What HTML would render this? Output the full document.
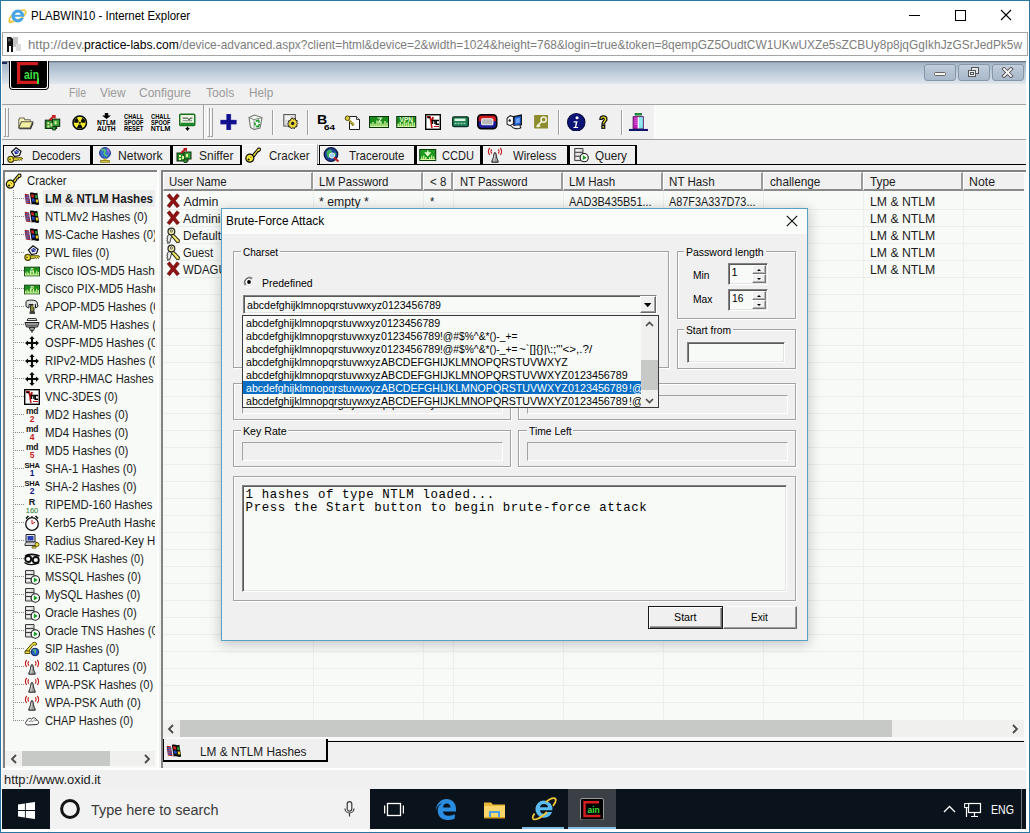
<!DOCTYPE html>
<html><head><meta charset="utf-8"><title>PLABWIN10 - Internet Explorer</title>
<style>
*{box-sizing:border-box;margin:0;padding:0}
html,body{width:1030px;height:833px;overflow:hidden;background:#fff}
body{font-family:"Liberation Sans",sans-serif;font-size:12px;color:#000;position:relative}
.t{position:absolute;white-space:pre;line-height:1;transform-origin:0 0}
.clip{position:absolute;overflow:hidden}
</style></head>
<body>
<svg style="position:absolute;left:8.3px;top:6.3px;" width="19.2" height="19.2" viewBox="0 0 18 18"><ellipse cx="9" cy="9.2" rx="8.6" ry="3.6" fill="none" stroke="#f0c63f" stroke-width="1.5" transform="rotate(-30 9 9.2)"/><path d="M9.2 3.4a6 6 0 1 0 5.7 7.9h-3.2a3 3 0 0 1-5.3-1.2h8.8A6 6 0 0 0 9.2 3.4zM6.3 8.1a3 3 0 0 1 5.7 0z" fill="#46a5e6"/><path d="M1.2 13.5c-.9 2 .6 2.6 3.3 1.4" fill="none" stroke="#f0c63f" stroke-width="1.3"/></svg><span class="t" style="left:30.9px;top:9.67px;font-size:12.2px;transform:scaleX(0.9395);">PLABWIN10 - Internet Explorer</span><div style="position:absolute;left:909px;top:15px;width:11px;height:1px;background:#000"></div><div style="position:absolute;left:955px;top:10px;width:11px;height:11px;border:1px solid #000"></div><svg style="position:absolute;left:1000px;top:9px;" width="12" height="12" viewBox="0 0 12 12"><path d="M1 1L11 11M11 1L1 11" stroke="#000" stroke-width="1.1"/></svg><div style="position:absolute;left:2px;top:32px;width:1026px;height:24px;border:1px solid #a6a6a6;background:#fff"></div><svg style="position:absolute;left:7px;top:36px;" width="15" height="16" viewBox="0 0 15 16"><rect x="6" y="1" width="5" height="10" fill="#c4c4c4"/><rect x="9" y="8" width="5" height="7" fill="#dcdcdc"/><path d="M0 1h4l2 2v13h-2v-6h-2v6h-2z" fill="#111"/><rect x="1" y="2.5" width="2.5" height="3" fill="#555"/></svg><span class="t" style="left:27.5px;top:38.26px;font-size:13.4px;color:#7d7d7d;transform:scaleX(0.9808);">http://dev.</span><span class="t" style="left:84.2px;top:38.26px;font-size:13.4px;transform:scaleX(0.9034);">practice-labs.com</span><span class="t" style="left:179px;top:38.26px;font-size:13.4px;color:#7d7d7d;transform:scaleX(0.8890);">/device-advanced.aspx?client=html&amp;device=2&amp;width=1024&amp;height=768&amp;login=true&amp;token=8qempGZ5OudtCW1UKwUXZe5sZCBUy8p8jqGgIkhJzGSrJedPk5w</span>
<div style="position:absolute;left:2px;top:61px;width:1024px;height:768px;background:#f0f0f0"></div><div style="position:absolute;left:2px;top:61px;width:1024px;height:23px;background:linear-gradient(#56626e 0,#7d8b9a 1px,#a5b7c9 2px,#b6c5d5 9px,#cdd7e2 17px,#dfe6ee 23px)"></div><div style="position:absolute;left:9px;top:61px;width:40px;height:29px;background:#000;border-radius:0 0 4px 4px"></div><div style="position:absolute;left:10px;top:61px;width:38px;height:27.5px;border:1px solid #fff;border-top:0;border-radius:0 0 3px 3px"></div><svg style="position:absolute;left:15px;top:61px;" width="28" height="25" viewBox="0 0 28 25"><path d="M23 2.700H3.600V21.300H23" fill="none" stroke="#d01c1c" stroke-width="3.300"/></svg><span class="t" style="left:24px;top:69.12px;font-size:12.5px;font-weight:700;color:#3ee03e;transform:scaleX(0.8304);">ain</span><div style="position:absolute;left:37.3px;top:78px;width:1.5px;height:6px;background:#3ee03e"></div><div style="position:absolute;left:2px;top:62px;width:5px;height:2px;background:#1c2a5a"></div><div style="position:absolute;left:924px;top:64px;width:32px;height:17px;border:1px solid #8797aa;border-radius:3px;background:linear-gradient(#c3cfdc,#b3c1d1 50%,#aab9cb)"></div><div style="position:absolute;left:958px;top:64px;width:32px;height:17px;border:1px solid #8797aa;border-radius:3px;background:linear-gradient(#c3cfdc,#b3c1d1 50%,#aab9cb)"></div><div style="position:absolute;left:992px;top:64px;width:32px;height:17px;border:1px solid #8797aa;border-radius:3px;background:linear-gradient(#c3cfdc,#b3c1d1 50%,#aab9cb)"></div><div style="position:absolute;left:934px;top:72px;width:12px;height:4px;background:#f4f4f4;border:1px solid #666;border-radius:1.5px"></div><svg style="position:absolute;left:967px;top:66px;" width="14" height="13" viewBox="0 0 14 13"><rect x="4.5" y="1.5" width="7" height="6" fill="#dfe6ee" stroke="#555" stroke-width="1"/><rect x="1.5" y="4.5" width="7" height="6" fill="#e8edf3" stroke="#555" stroke-width="1"/><rect x="3.5" y="6.5" width="3" height="2" fill="none" stroke="#555" stroke-width="1"/></svg><svg style="position:absolute;left:1001px;top:66.5px;" width="13" height="11" viewBox="0 0 13 11"><path d="M3 2L10 9M10 2L3 9" stroke="#5a5a5a" stroke-width="3.8" stroke-linecap="square"/><path d="M3 2L10 9M10 2L3 9" stroke="#f6f6f6" stroke-width="1.9" stroke-linecap="square"/></svg><span class="t" style="left:68.5px;top:86.63px;font-size:12.6px;color:#9a9a9a;transform:scaleX(0.8376);">File</span><span class="t" style="left:99.5px;top:86.63px;font-size:12.6px;color:#9a9a9a;transform:scaleX(0.9417);">View</span><span class="t" style="left:139.3px;top:86.63px;font-size:12.6px;color:#9a9a9a;transform:scaleX(0.9522);">Configure</span><span class="t" style="left:206.2px;top:86.63px;font-size:12.6px;color:#9a9a9a;transform:scaleX(0.9658);">Tools</span><span class="t" style="left:249.3px;top:86.63px;font-size:12.6px;color:#9a9a9a;transform:scaleX(0.9341);">Help</span>
<div style="position:absolute;left:2px;top:104px;width:1024px;height:36px;background:#f7faf7;border-top:1px solid #a3a3a3;border-bottom:1px solid #a3a3a3"></div><div style="position:absolute;left:2px;top:105px;width:653px;height:34px;background:#f0f0f0;border-right:1px solid #fdfdfd"></div><div style="position:absolute;left:203px;top:105px;width:2px;height:34px;background:#fff;border-left:1px solid #a0a0a0"></div><div style="position:absolute;left:3px;top:108px;width:3px;height:29px;border-left:1px solid #fff;border-right:1px solid #a0a0a0;border-bottom:1px solid #a0a0a0"></div><div style="position:absolute;left:6px;top:108px;width:3px;height:29px;border-left:1px solid #fff;border-right:1px solid #a0a0a0;border-bottom:1px solid #a0a0a0"></div><div style="position:absolute;left:207px;top:108px;width:3px;height:29px;border-left:1px solid #fff;border-right:1px solid #a0a0a0;border-bottom:1px solid #a0a0a0"></div><div style="position:absolute;left:210px;top:108px;width:3px;height:29px;border-left:1px solid #fff;border-right:1px solid #a0a0a0;border-bottom:1px solid #a0a0a0"></div><div style="position:absolute;left:272px;top:110px;width:2px;height:25px;border-left:1px solid #a0a0a0;border-right:1px solid #fff"></div><div style="position:absolute;left:307px;top:110px;width:2px;height:25px;border-left:1px solid #a0a0a0;border-right:1px solid #fff"></div><div style="position:absolute;left:558px;top:110px;width:2px;height:25px;border-left:1px solid #a0a0a0;border-right:1px solid #fff"></div><div style="position:absolute;left:621px;top:110px;width:2px;height:25px;border-left:1px solid #a0a0a0;border-right:1px solid #fff"></div><svg style="position:absolute;left:17px;top:115px;" width="17" height="15" viewBox="0 0 16 14.500"><path d="M1.5 12.5V4.5l1-1.5h4l1 1.5h5v1.5" fill="#f7f4b8" stroke="#6b6b5a" stroke-width="1"/><path d="M1.5 12.5L4 6.5h11l-2.5 6z" fill="#f3efa2" stroke="#55554a" stroke-width="1"/><path d="M2 13.3h11l2.4-6" fill="none" stroke="#2a2a2a" stroke-width="1"/></svg><svg style="position:absolute;left:44px;top:114px;" width="17" height="16.5" viewBox="0 0 16 16"><rect x="1" y="6" width="11" height="8" fill="#2d8a2d" stroke="#0d2d0d" stroke-width="1"/><rect x="8" y="5" width="7" height="7" fill="#3aa03a" stroke="#0d2d0d" stroke-width="1"/><path d="M3 8h2v2h-2zM6 9h2v3h-2zM10 7h2v3h-2zM3 11h2v2h-2z" fill="#d8f0a0"/><path d="M5 6L10 1.5" stroke="#c01818" stroke-width="1.8"/><path d="M7 1h4v4z" fill="#c01818"/><path d="M11 13v2.5h-3v-2" fill="#3aa03a" stroke="#0d2d0d" stroke-width=".8"/></svg><svg style="position:absolute;left:72px;top:114.5px;" width="15.5" height="15.5" viewBox="0 0 16 16"><circle cx="8" cy="8" r="7" fill="#f4ec2a" stroke="#000" stroke-width="1.5"/><path d="M8.95 9.65L10.95 13.11A5.9 5.9 0 0 1 5.05 13.11L7.05 9.65A1.9 1.9 0 0 0 8.95 9.65zM6.10 8.00L2.10 8.00A5.9 5.9 0 0 1 5.05 2.89L7.05 6.35A1.9 1.9 0 0 0 6.10 8.00zM8.95 6.35L10.95 2.89A5.9 5.9 0 0 1 13.90 8.00L9.90 8.00A1.9 1.9 0 0 0 8.95 6.35z" fill="#0a0a0a"/><circle cx="8" cy="8" r="1.1" fill="#0a0a0a"/></svg><svg style="position:absolute;left:101.5px;top:113px;" width="9" height="6" viewBox="0 0 9 6"><path d="M2.800 0h3.400v2.500H9L4.500 6 0 2.500h2.800z" fill="#000"/></svg><span class="t" style="left:96.8px;top:118.97px;font-size:7px;font-weight:700;transform:scaleX(0.9561);">NTLM</span><span class="t" style="left:96.8px;top:124.77px;font-size:7px;font-weight:700;transform:scaleX(0.9561);">AUTH</span><span class="t" style="left:123.6px;top:113.07px;font-size:7px;font-weight:700;transform:scaleX(0.8179);">CHALL</span><span class="t" style="left:123.6px;top:118.87px;font-size:7px;font-weight:700;transform:scaleX(0.7913);">SPOOF</span><span class="t" style="left:123.6px;top:124.67px;font-size:7px;font-weight:700;transform:scaleX(0.8311);">RESET</span><span class="t" style="left:150.8px;top:113.07px;font-size:7px;font-weight:700;transform:scaleX(0.8179);">CHALL</span><span class="t" style="left:150.8px;top:118.87px;font-size:7px;font-weight:700;transform:scaleX(0.7913);">SPOOF</span><span class="t" style="left:150.8px;top:124.67px;font-size:7px;font-weight:700;">NTLM</span><svg style="position:absolute;left:179px;top:112.6px;" width="16.5" height="19.5" viewBox="0 0 16 18"><rect x=".7" y=".7" width="14.600" height="11" rx="1" fill="#e9f5e0" stroke="#17701f" stroke-width="1.400"/><rect x="1.500" y="9" width="13" height="2.500" fill="#1c8a28"/><path d="M3.500 4.500h5l1.500 2 1-2h2" fill="none" stroke="#333" stroke-width=".9"/><path d="M3.500 7h9" stroke="#666" stroke-width=".7"/><path d="M6 14h1.500v-1.200h1.500V14h1.500L8.250 17z" fill="#000"/></svg><svg style="position:absolute;left:220px;top:114px;" width="17" height="16" viewBox="0 0 16 16"><path d="M6 0h4.4v6H16v4.2h-5.6V16H6v-5.8H0V6h6z" fill="#10108c"/><path d="M6 0h4.4v6H16v4.2h-5.6V16H6v-5.8H0V6h6z" fill="none" stroke="#4a4ab8" stroke-width=".6" opacity=".6"/></svg><svg style="position:absolute;left:246.5px;top:114px;" width="17" height="16" viewBox="0 0 16 16"><path d="M1.5 3.500l5.500-2.500 7.500 2.500-2 10.500-6 1.500-3.500-2z" fill="#f4f6f4" stroke="#6f776f" stroke-width="1.100"/><path d="M1.500 3.500l5 2.200 8-2.200" fill="none" stroke="#7f877f" stroke-width="1"/><path d="M6.500 5.700L6.500 15" stroke="#9aa09a" stroke-width=".9"/><path d="M8.200 7.200l2.600-.8 1 2.200M12 10l-1.200 2.600-2.600-.3M7.800 11.200l-.8-2.600" fill="none" stroke="#1f9a2e" stroke-width="1.700"/></svg><svg style="position:absolute;left:283px;top:114.3px;" width="16" height="15" viewBox="0 0 16 15.500"><rect x=".5" y=".5" width="12" height="12" fill="#d9d9d9" stroke="#555" stroke-width="1"/><rect x="2" y="2" width="5" height="4" fill="#f4f4f4"/><path d="M9 4l1.4 1.2 1.8-.6.5 1.8 1.8.5-.6 1.8L15 10l-1.2 1.2.4 1.8-1.8.3-.8 1.7-1.7-.7-1.6.9-.9-1.6-1.8-.2.2-1.8L4.400 10.300l1.300-1.300-.300-1.800 1.800-.300.700-1.700z" fill="#e8d23a" stroke="#1a1a1a" stroke-width="1"/><circle cx="9.7" cy="9.700" r="1.700" fill="#1a1a1a"/></svg><span class="t" style="left:316.8px;top:113.92px;font-size:12.5px;font-weight:700;transform:scaleX(1.1294);">B</span><span class="t" style="left:323.5px;top:124.45px;font-size:7.5px;font-weight:700;transform:scaleX(1.3184);">64</span><svg style="position:absolute;left:344px;top:114.6px;" width="17" height="15.5" viewBox="0 0 16 15.500"><path d="M5 1.500h7l3 3V14.500H5z" fill="#fbfbfb" stroke="#1a1a1a" stroke-width="1"/><path d="M12 1.500v3h3" fill="#d5d5d5" stroke="#1a1a1a" stroke-width=".8"/><circle cx="3" cy="3.200" r="2.300" fill="#e2cd3c" stroke="#4a4210" stroke-width="1"/><path d="M4.500 4.800l5 5M7.500 7.800l-1.300 1.300M9 9.300l-1.300 1.300" stroke="#8a7a18" stroke-width="1.700"/><path d="M4.500 4.800l5 5" stroke="#e2cd3c" stroke-width=".8"/></svg><svg style="position:absolute;left:369px;top:116px;" width="20" height="12" viewBox="0 0 20 12"><rect x=".5" y=".5" width="19" height="11" fill="#1c8c1c" stroke="#0a330a" stroke-width="1"/><rect x="1.3" y="7.5" width="1.300" height="3.0" fill="#d2f79a"/><rect x="3.3" y="6" width="1.300" height="4.5" fill="#d2f79a"/><rect x="5.3" y="7.5" width="1.300" height="3.0" fill="#d2f79a"/><rect x="7.3" y="4.5" width="1.300" height="6.0" fill="#d2f79a"/><rect x="9.3" y="6.5" width="1.300" height="4.0" fill="#d2f79a"/><rect x="11.3" y="5.5" width="1.300" height="5.0" fill="#d2f79a"/><rect x="13.3" y="7.5" width="1.300" height="3.0" fill="#d2f79a"/><rect x="15.3" y="5" width="1.300" height="5.5" fill="#d2f79a"/><rect x="17.3" y="6.5" width="1.300" height="4.0" fill="#d2f79a"/><rect x="1" y="9.800" width="18" height="1.200" fill="#d2f79a"/><path d="M8.500 2h4l-3 4h3" fill="none" stroke="#e8ffd0" stroke-width="1.100"/></svg><svg style="position:absolute;left:396px;top:116px;" width="20.5" height="12" viewBox="0 0 20 12"><rect x=".5" y=".5" width="19" height="11" fill="#1c8c1c" stroke="#0a330a" stroke-width="1"/><rect x="1.3" y="7.5" width="1.300" height="3.0" fill="#d2f79a"/><rect x="3.3" y="6" width="1.300" height="4.5" fill="#d2f79a"/><rect x="5.3" y="7.5" width="1.300" height="3.0" fill="#d2f79a"/><rect x="7.3" y="4.5" width="1.300" height="6.0" fill="#d2f79a"/><rect x="9.3" y="6.5" width="1.300" height="4.0" fill="#d2f79a"/><rect x="11.3" y="5.5" width="1.300" height="5.0" fill="#d2f79a"/><rect x="13.3" y="7.5" width="1.300" height="3.0" fill="#d2f79a"/><rect x="15.3" y="5" width="1.300" height="5.5" fill="#d2f79a"/><rect x="17.3" y="6.5" width="1.300" height="4.0" fill="#d2f79a"/><rect x="1" y="9.800" width="18" height="1.200" fill="#d2f79a"/><text x="10" y="6.300" font-family="Liberation Sans" font-size="6.500" font-weight="700" fill="#e8ffd0" text-anchor="middle">VPN</text></svg><svg style="position:absolute;left:425px;top:114px;" width="16" height="16" viewBox="0 0 16 16"><rect x=".7" y=".7" width="14.600" height="14.600" fill="#fff" stroke="#000" stroke-width="1.400"/><path d="M2 3h3l1.500 6L8 3" fill="none" stroke="#c01010" stroke-width="1.800"/><path d="M2.500 3.500h2.500" stroke="#000" stroke-width="1.600"/><path d="M7.500 10V6.500h2.500V10" fill="none" stroke="#000" stroke-width="1.500"/><path d="M14 6.500h-2.800v3.800H14" fill="none" stroke="#000" stroke-width="1.500"/><path d="M6 9l1 5" stroke="#c01010" stroke-width="1.500"/><path d="M9 12.500h5" stroke="#c01010" stroke-width="1"/></svg><svg style="position:absolute;left:452px;top:116.3px;" width="17" height="11.5" viewBox="0 0 17 11"><rect x=".6" y=".6" width="15.800" height="9.800" rx="1.500" fill="#1e7a52" stroke="#0b2e22" stroke-width="1.200"/><rect x="2.500" y="2.300" width="11" height="2.500" fill="#d8f5e0"/><path d="M2.500 6.500h2v1.500h-2zM5.500 6.500h2v1.500h-2zM8.500 6.500h2v1.500h-2zM11.500 6.500h2v1.500h-2z" fill="#8fd6ae"/></svg><svg style="position:absolute;left:477px;top:114px;" width="20.5" height="15.5" viewBox="0 0 20 15"><rect x=".8" y=".8" width="18.400" height="13.400" rx="3.500" fill="#1c1c9c" stroke="#000" stroke-width="1.600"/><path d="M1.600 7V4.300a2.700 2.700 0 0 1 2.700-2.700h11.400a2.700 2.700 0 0 1 2.700 2.700V7z" fill="#d01818"/><rect x="4.500" y="4.500" width="11" height="6" rx="1" fill="#b9b9b9" stroke="#f2f2f2" stroke-width="1"/></svg><svg style="position:absolute;left:506px;top:113.6px;" width="17" height="16" viewBox="0 0 16 15"><path d="M1 4l3-2.500 3 1V9l-3 2-3-1.500z" fill="#fafafa" stroke="#222" stroke-width="1"/><path d="M7.500 2.500l7-1.500V10l-7 1.500z" fill="#1f5fd8" stroke="#111" stroke-width="1.100"/><path d="M5 11.500c2 2.500 6 3 9 1.500l-1-2.500" fill="#f1f1f1" stroke="#222" stroke-width="1"/><circle cx="3.500" cy="6" r="1.200" fill="#222"/><path d="M9 4.500l4-1v4.500l-4 1z" fill="#6fa2f2"/></svg><svg style="position:absolute;left:534px;top:115.3px;" width="14.3" height="13.6" viewBox="0 0 14 13.500"><rect x="0" y="0" width="14" height="13.500" rx="1" fill="#8d8d2f"/><circle cx="9.500" cy="4.500" r="2.600" fill="none" stroke="#f4f4d8" stroke-width="1.500"/><path d="M7.700 6.300L2.500 11.500M4.300 9.700l1.700 1.700M2.500 11.500h2.300" stroke="#f4f4d8" stroke-width="1.500" fill="none"/></svg><svg style="position:absolute;left:567px;top:112.8px;" width="18.5" height="18.5" viewBox="0 0 18 18"><circle cx="9" cy="9" r="8.500" fill="#0c1478" stroke="#060a3c" stroke-width="1"/><circle cx="9.800" cy="4.600" r="1.500" fill="#fff"/><path d="M6.500 8h3.800l-1.300 5.500h1.800v1.200H6.300v-1.200h1.300l1-4.300H6.500z" fill="#fff"/></svg><svg style="position:absolute;left:598px;top:115px;" width="11" height="14" viewBox="0 0 10.500 13.500"><path d="M1.800 4.200C1.800 1.800 3.300.8 5.200.8s3.400 1.200 3.400 3.200c0 2.200-2.300 2.600-2.300 4.800H3.800c0-2.800 2.200-3.200 2.200-4.700 0-.7-.4-1.100-1-1.100s-1 .4-1 1.200z" fill="#f4e62a" stroke="#111" stroke-width="1.200"/><rect x="3.700" y="10.200" width="2.700" height="2.600" fill="#f4e62a" stroke="#111" stroke-width="1.200"/></svg><svg style="position:absolute;left:629px;top:112.5px;" width="19" height="18" viewBox="0 0 18.500 17.500"><rect x="6" y="0" width="6" height="2" fill="#2fae4a" stroke="#0c5a22" stroke-width=".8"/><rect x="4" y="3.500" width="5" height="12" fill="#c018b8"/><rect x="9" y="3.500" width="5" height="12" fill="#7fe4ee"/><path d="M9 3.500v12" stroke="#fff" stroke-width="1.200"/><path d="M4 3.500h10v12H4z" fill="none" stroke="#4a0a58" stroke-width=".8"/><path d="M5.200 5h2.600M5.200 7h2.600M5.200 9h2.600M5.200 11h2.600M10.200 5h2.600M10.200 7h2.600M10.200 9h2.600M10.200 11h2.600" stroke="#fff" stroke-width=".6" opacity=".55"/><rect x="0" y="15.500" width="18.500" height="2" fill="#14146e"/></svg>
<div style="position:absolute;left:3px;top:145px;width:88px;height:20px;background:#f0f0f0;border:1px solid #000;box-shadow:inset 1px 1px 0 #fbfbfb,1px 0 0 #000"></div><span class="t" style="left:31.6px;top:149.80px;font-size:12.4px;color:#1c1c1c;transform:scaleX(0.9127);">Decoders</span><div style="position:absolute;left:92px;top:145px;width:79px;height:20px;background:#f0f0f0;border:1px solid #000;box-shadow:inset 1px 1px 0 #fbfbfb,1px 0 0 #000"></div><span class="t" style="left:118.4px;top:149.80px;font-size:12.4px;color:#1c1c1c;transform:scaleX(0.9812);">Network</span><div style="position:absolute;left:172px;top:145px;width:69px;height:20px;background:#f0f0f0;border:1px solid #000;box-shadow:inset 1px 1px 0 #fbfbfb,1px 0 0 #000"></div><span class="t" style="left:199px;top:149.80px;font-size:12.4px;color:#1c1c1c;transform:scaleX(0.9693);">Sniffer</span><div style="position:absolute;left:242px;top:144px;width:76px;height:21px;background:#f4f4f4;border-top:1px solid #fff;border-left:1px solid #fff;border-right:1px solid #9a9a9a"></div><span class="t" style="left:269px;top:149.80px;font-size:12.4px;color:#1c1c1c;transform:scaleX(0.9337);">Cracker</span><div style="position:absolute;left:319px;top:145px;width:96px;height:20px;background:#f0f0f0;border:1px solid #000;box-shadow:inset 1px 1px 0 #fbfbfb,1px 0 0 #000"></div><span class="t" style="left:348.5px;top:149.80px;font-size:12.4px;color:#1c1c1c;transform:scaleX(0.9333);">Traceroute</span><div style="position:absolute;left:416px;top:145px;width:65px;height:20px;background:#f0f0f0;border:1px solid #000;box-shadow:inset 1px 1px 0 #fbfbfb,1px 0 0 #000"></div><span class="t" style="left:442px;top:149.80px;font-size:12.4px;color:#1c1c1c;transform:scaleX(0.8939);">CCDU</span><div style="position:absolute;left:482px;top:145px;width:86px;height:20px;background:#f0f0f0;border:1px solid #000;box-shadow:inset 1px 1px 0 #fbfbfb,1px 0 0 #000"></div><span class="t" style="left:513px;top:149.80px;font-size:12.4px;color:#1c1c1c;transform:scaleX(0.9158);">Wireless</span><div style="position:absolute;left:569px;top:145px;width:67px;height:20px;background:#f0f0f0;border:1px solid #000;box-shadow:inset 1px 1px 0 #fbfbfb,1px 0 0 #000"></div><span class="t" style="left:595px;top:149.80px;font-size:12.4px;color:#1c1c1c;transform:scaleX(0.9481);">Query</span><div style="position:absolute;left:2px;top:164px;width:1024px;height:1px;background:#000"></div><div style="position:absolute;left:242px;top:164px;width:75px;height:1px;background:#f4f4f4"></div><svg style="position:absolute;left:6.5px;top:147px;" width="16" height="16" viewBox="0 0 16 16"><path d="M4.500 5L9 .8l5 3.400-1.500 4.300-5 1z" fill="#f2f2f6" stroke="#111" stroke-width="1.200"/><path d="M7 4.800l2.500-2 2.500 1.700-1 2.300-2.800.5z" fill="#27349c"/><path d="M8 3.700l2.800 1.900" stroke="#cfd4ff" stroke-width=".7"/><circle cx="3.800" cy="12.300" r="3" fill="#f4e43c" stroke="#4a4208" stroke-width="1.200"/><path d="M6.200 10.800h8.800l.5 1.200-1.200 1.200-1-.7-1 1-1.200-1-1 .800H6.400z" fill="#f4e43c" stroke="#4a4208" stroke-width="1"/><circle cx="3" cy="12.300" r=".9" fill="#4a4208"/></svg><svg style="position:absolute;left:97.5px;top:147px;" width="14" height="16" viewBox="0 0 14 16"><circle cx="7" cy="6" r="5.400" fill="#3a6fd6" stroke="#1a2e7a" stroke-width="1"/><path d="M3.500 3.500c1.500-1.500 3-1 3.500 0s-1 2-.5 3.500 2 1 2.500 2.500" fill="none" stroke="#58c46a" stroke-width="1.800"/><path d="M9 2.500c1 .5 2 2 1.500 3.500" fill="none" stroke="#b06ad8" stroke-width="1.500"/><path d="M5.500 11.500h3v1.700h-3z" fill="#d9c53a"/><path d="M2.500 13.500h9v1.800h-9z" fill="#e8d640" stroke="#7a6c18" stroke-width=".8"/></svg><svg style="position:absolute;left:176px;top:146.5px;" width="16" height="16" viewBox="0 0 16 16"><rect x="1" y="6" width="11" height="8" fill="#2d8a2d" stroke="#0d2d0d" stroke-width="1"/><rect x="8" y="5" width="7" height="7" fill="#3aa03a" stroke="#0d2d0d" stroke-width="1"/><path d="M3 8h2v2h-2zM6 9h2v3h-2zM10 7h2v3h-2zM3 11h2v2h-2z" fill="#d8f0a0"/><path d="M5 6L10 1.5" stroke="#c01818" stroke-width="1.8"/><path d="M7 1h4v4z" fill="#c01818"/><path d="M11 13v2.5h-3v-2" fill="#3aa03a" stroke="#0d2d0d" stroke-width=".8"/></svg><svg style="position:absolute;left:245px;top:146.5px;" width="16" height="16" viewBox="0 0 16 16"><path d="M6.800 8.600L13.200 1l2 .3.300 1.700-1.300 1.500-1.300-.2-.2 1.400-1.300.2-.2 1.400-1.800 2.200z" fill="#f4e43c" stroke="#111" stroke-width="1.100"/><circle cx="4.800" cy="11.200" r="4" fill="#f4e43c" stroke="#111" stroke-width="1.200"/><circle cx="3.600" cy="12.400" r="1" fill="#111"/><path d="M5 9.500l1.500 1.500" stroke="#8a7e10" stroke-width=".8"/></svg><svg style="position:absolute;left:322.5px;top:147px;" width="17" height="16" viewBox="0 0 16 16"><circle cx="7.500" cy="7.500" r="6.800" fill="#1d3f9a" stroke="#0a163c" stroke-width="1.200"/><path d="M3 5c1.500-2.500 4-3 5-2s-.5 2.500 0 4-2 1.500-2.500 3.500S3 9 3 5z" fill="#3eb058"/><path d="M10.500 4.500c1.500.5 2.500 2.500 2 4.500l-1.500-1z" fill="#3eb058"/><circle cx="8.500" cy="8.500" r="2.600" fill="#9ad0f0" stroke="#e8f4ff" stroke-width="1"/><path d="M10.500 10.500l4.500 4" stroke="#c02020" stroke-width="2"/></svg><svg style="position:absolute;left:419px;top:149px;" width="17.5" height="12" viewBox="0 0 17 12"><rect x=".5" y=".5" width="16" height="11" fill="#1f9a1f" stroke="#0b3d0b" stroke-width="1"/><path d="M8.500 1.500v4M6.500 4l2 2.500 2-2.500z" stroke="#e8ffd0" stroke-width="1.400" fill="#e8ffd0"/><path d="M2.500 10.500v-3M4.500 10.500v-4M6.500 10.500v-2.500M10.500 10.500v-2.500M12.500 10.500v-4M14.500 10.500v-3" stroke="#d8f8a0" stroke-width="1.200"/><rect x="1" y="10" width="15" height="1" fill="#d8f8a0"/></svg><svg style="position:absolute;left:486.5px;top:146.5px;" width="16" height="16" viewBox="0 0 16 16"><path d="M4.800 15.200c0-2 1.200-3 1.700-5.500l.6-3.200c.3-1.300 1.500-1.300 1.800 0l.6 3.200c.5 2.500 1.700 3.500 1.700 5.500z" fill="#9c9c9c" stroke="#1f1f1f" stroke-width="1"/><path d="M6.800 14.500c0-2 .7-5 1.200-7" fill="none" stroke="#d8d8d8" stroke-width="1"/><path d="M4.800 2.300c-1.100 1.100-1.100 3.100 0 4.200M2.800 1c-1.900 1.900-1.900 5 0 6.900M11.200 2.300c1.100 1.100 1.100 3.100 0 4.200M13.200 1c1.900 1.900 1.900 5 0 6.900" fill="none" stroke="#c41c1c" stroke-width="1.100"/></svg><svg style="position:absolute;left:573px;top:147px;" width="16" height="15.5" viewBox="0 0 16 16"><path d="M1.500 1.500h8.500v12.500h-8.500z" fill="#d9d9d9" stroke="#3c3c3c" stroke-width="1"/><path d="M1.500 5.500h8.500M1.500 9.500h8.500" stroke="#3c3c3c" stroke-width="1"/><path d="M3 3.500h4M3 7.500h4M3 11.500h3" stroke="#f8f8f8" stroke-width="1.200"/><circle cx="11.300" cy="11" r="4.200" fill="#f8fff8" stroke="#141414" stroke-width="1.100"/><path d="M9.900 8.500l3.800 2.500-3.800 2.500z" fill="#149a24"/></svg>
<div style="position:absolute;left:3px;top:170px;width:154px;height:598px;background:#f7faf7;border-left:2px solid #828282;border-top:2px solid #828282"></div><div style="position:absolute;left:157px;top:170px;width:2px;height:598px;background:#fff"></div><div class="clip" style="left:5px;top:172px;width:150px;height:596px"><span class="t" style="left:21.8px;top:2.80px;font-size:12.4px;color:#1c1c1c;transform:scaleX(0.9107);">Cracker</span><div style="position:absolute;left:8px;top:18px;width:1px;height:531px;background:repeating-linear-gradient(#8a8a8a 0,#8a8a8a 1px,transparent 1px,transparent 2px)"></div><div style="position:absolute;left:8px;top:26.3px;width:11px;height:1px;background:repeating-linear-gradient(90deg,#8a8a8a 0,#8a8a8a 1px,transparent 1px,transparent 2px)"></div><div style="position:absolute;left:38px;top:18px;width:112px;height:17px;background:#ececec"></div><span class="t" style="left:40px;top:20.80px;font-size:12.4px;font-weight:700;color:#1c1c1c;transform:scaleX(0.9338);">LM &amp; NTLM Hashes</span><div style="position:absolute;left:8px;top:44.3px;width:11px;height:1px;background:repeating-linear-gradient(90deg,#8a8a8a 0,#8a8a8a 1px,transparent 1px,transparent 2px)"></div><span class="t" style="left:40px;top:38.80px;font-size:12.4px;color:#1c1c1c;transform:scaleX(0.9246);">NTLMv2 Hashes (0)</span><div style="position:absolute;left:8px;top:62.3px;width:11px;height:1px;background:repeating-linear-gradient(90deg,#8a8a8a 0,#8a8a8a 1px,transparent 1px,transparent 2px)"></div><span class="t" style="left:40px;top:56.80px;font-size:12.4px;color:#1c1c1c;transform:scaleX(0.9111);">MS-Cache Hashes (0)</span><div style="position:absolute;left:8px;top:80.3px;width:11px;height:1px;background:repeating-linear-gradient(90deg,#8a8a8a 0,#8a8a8a 1px,transparent 1px,transparent 2px)"></div><span class="t" style="left:40px;top:74.80px;font-size:12.4px;color:#1c1c1c;transform:scaleX(0.9139);">PWL files (0)</span><div style="position:absolute;left:8px;top:98.3px;width:11px;height:1px;background:repeating-linear-gradient(90deg,#8a8a8a 0,#8a8a8a 1px,transparent 1px,transparent 2px)"></div><span class="t" style="left:40px;top:92.80px;font-size:12.4px;color:#1c1c1c;transform:scaleX(0.9254);">Cisco IOS-MD5 Hashes (0)</span><div style="position:absolute;left:8px;top:116.3px;width:11px;height:1px;background:repeating-linear-gradient(90deg,#8a8a8a 0,#8a8a8a 1px,transparent 1px,transparent 2px)"></div><span class="t" style="left:40px;top:110.80px;font-size:12.4px;color:#1c1c1c;transform:scaleX(0.9225);">Cisco PIX-MD5 Hashes (0)</span><div style="position:absolute;left:8px;top:134.3px;width:11px;height:1px;background:repeating-linear-gradient(90deg,#8a8a8a 0,#8a8a8a 1px,transparent 1px,transparent 2px)"></div><span class="t" style="left:40px;top:128.80px;font-size:12.4px;color:#1c1c1c;transform:scaleX(0.9189);">APOP-MD5 Hashes (0)</span><div style="position:absolute;left:8px;top:152.3px;width:11px;height:1px;background:repeating-linear-gradient(90deg,#8a8a8a 0,#8a8a8a 1px,transparent 1px,transparent 2px)"></div><span class="t" style="left:40px;top:146.80px;font-size:12.4px;color:#1c1c1c;transform:scaleX(0.9273);">CRAM-MD5 Hashes (0)</span><div style="position:absolute;left:8px;top:170.3px;width:11px;height:1px;background:repeating-linear-gradient(90deg,#8a8a8a 0,#8a8a8a 1px,transparent 1px,transparent 2px)"></div><span class="t" style="left:40px;top:164.80px;font-size:12.4px;color:#1c1c1c;transform:scaleX(0.9055);">OSPF-MD5 Hashes (0)</span><div style="position:absolute;left:8px;top:188.3px;width:11px;height:1px;background:repeating-linear-gradient(90deg,#8a8a8a 0,#8a8a8a 1px,transparent 1px,transparent 2px)"></div><span class="t" style="left:40px;top:182.80px;font-size:12.4px;color:#1c1c1c;transform:scaleX(0.9165);">RIPv2-MD5 Hashes (0)</span><div style="position:absolute;left:8px;top:206.3px;width:11px;height:1px;background:repeating-linear-gradient(90deg,#8a8a8a 0,#8a8a8a 1px,transparent 1px,transparent 2px)"></div><span class="t" style="left:40px;top:200.80px;font-size:12.4px;color:#1c1c1c;transform:scaleX(0.9013);">VRRP-HMAC Hashes (0)</span><div style="position:absolute;left:8px;top:224.3px;width:11px;height:1px;background:repeating-linear-gradient(90deg,#8a8a8a 0,#8a8a8a 1px,transparent 1px,transparent 2px)"></div><span class="t" style="left:40px;top:218.80px;font-size:12.4px;color:#1c1c1c;transform:scaleX(0.8940);">VNC-3DES (0)</span><div style="position:absolute;left:8px;top:242.3px;width:11px;height:1px;background:repeating-linear-gradient(90deg,#8a8a8a 0,#8a8a8a 1px,transparent 1px,transparent 2px)"></div><span class="t" style="left:40px;top:236.80px;font-size:12.4px;color:#1c1c1c;transform:scaleX(0.9245);">MD2 Hashes (0)</span><div style="position:absolute;left:8px;top:260.3px;width:11px;height:1px;background:repeating-linear-gradient(90deg,#8a8a8a 0,#8a8a8a 1px,transparent 1px,transparent 2px)"></div><span class="t" style="left:40px;top:254.80px;font-size:12.4px;color:#1c1c1c;transform:scaleX(0.9245);">MD4 Hashes (0)</span><div style="position:absolute;left:8px;top:278.3px;width:11px;height:1px;background:repeating-linear-gradient(90deg,#8a8a8a 0,#8a8a8a 1px,transparent 1px,transparent 2px)"></div><span class="t" style="left:40px;top:272.80px;font-size:12.4px;color:#1c1c1c;transform:scaleX(0.9245);">MD5 Hashes (0)</span><div style="position:absolute;left:8px;top:296.3px;width:11px;height:1px;background:repeating-linear-gradient(90deg,#8a8a8a 0,#8a8a8a 1px,transparent 1px,transparent 2px)"></div><span class="t" style="left:40px;top:290.80px;font-size:12.4px;color:#1c1c1c;transform:scaleX(0.9110);">SHA-1 Hashes (0)</span><div style="position:absolute;left:8px;top:314.3px;width:11px;height:1px;background:repeating-linear-gradient(90deg,#8a8a8a 0,#8a8a8a 1px,transparent 1px,transparent 2px)"></div><span class="t" style="left:40px;top:308.80px;font-size:12.4px;color:#1c1c1c;transform:scaleX(0.9110);">SHA-2 Hashes (0)</span><div style="position:absolute;left:8px;top:332.3px;width:11px;height:1px;background:repeating-linear-gradient(90deg,#8a8a8a 0,#8a8a8a 1px,transparent 1px,transparent 2px)"></div><span class="t" style="left:40px;top:326.80px;font-size:12.4px;color:#1c1c1c;transform:scaleX(0.9061);">RIPEMD-160 Hashes (0)</span><div style="position:absolute;left:8px;top:350.3px;width:11px;height:1px;background:repeating-linear-gradient(90deg,#8a8a8a 0,#8a8a8a 1px,transparent 1px,transparent 2px)"></div><span class="t" style="left:40px;top:344.80px;font-size:12.4px;color:#1c1c1c;transform:scaleX(0.9329);">Kerb5 PreAuth Hashes (0)</span><div style="position:absolute;left:8px;top:368.3px;width:11px;height:1px;background:repeating-linear-gradient(90deg,#8a8a8a 0,#8a8a8a 1px,transparent 1px,transparent 2px)"></div><span class="t" style="left:40px;top:362.80px;font-size:12.4px;color:#1c1c1c;transform:scaleX(0.9203);">Radius Shared-Key Hashes (0)</span><div style="position:absolute;left:8px;top:386.3px;width:11px;height:1px;background:repeating-linear-gradient(90deg,#8a8a8a 0,#8a8a8a 1px,transparent 1px,transparent 2px)"></div><span class="t" style="left:40px;top:380.80px;font-size:12.4px;color:#1c1c1c;transform:scaleX(0.8743);">IKE-PSK Hashes (0)</span><div style="position:absolute;left:8px;top:404.3px;width:11px;height:1px;background:repeating-linear-gradient(90deg,#8a8a8a 0,#8a8a8a 1px,transparent 1px,transparent 2px)"></div><span class="t" style="left:40px;top:398.80px;font-size:12.4px;color:#1c1c1c;transform:scaleX(0.8965);">MSSQL Hashes (0)</span><div style="position:absolute;left:8px;top:422.3px;width:11px;height:1px;background:repeating-linear-gradient(90deg,#8a8a8a 0,#8a8a8a 1px,transparent 1px,transparent 2px)"></div><span class="t" style="left:40px;top:416.80px;font-size:12.4px;color:#1c1c1c;transform:scaleX(0.9088);">MySQL Hashes (0)</span><div style="position:absolute;left:8px;top:440.3px;width:11px;height:1px;background:repeating-linear-gradient(90deg,#8a8a8a 0,#8a8a8a 1px,transparent 1px,transparent 2px)"></div><span class="t" style="left:40px;top:434.80px;font-size:12.4px;color:#1c1c1c;transform:scaleX(0.9124);">Oracle Hashes (0)</span><div style="position:absolute;left:8px;top:458.3px;width:11px;height:1px;background:repeating-linear-gradient(90deg,#8a8a8a 0,#8a8a8a 1px,transparent 1px,transparent 2px)"></div><span class="t" style="left:40px;top:452.80px;font-size:12.4px;color:#1c1c1c;transform:scaleX(0.9062);">Oracle TNS Hashes (0)</span><div style="position:absolute;left:8px;top:476.3px;width:11px;height:1px;background:repeating-linear-gradient(90deg,#8a8a8a 0,#8a8a8a 1px,transparent 1px,transparent 2px)"></div><span class="t" style="left:40px;top:470.80px;font-size:12.4px;color:#1c1c1c;transform:scaleX(0.8839);">SIP Hashes (0)</span><div style="position:absolute;left:8px;top:494.3px;width:11px;height:1px;background:repeating-linear-gradient(90deg,#8a8a8a 0,#8a8a8a 1px,transparent 1px,transparent 2px)"></div><span class="t" style="left:40px;top:488.80px;font-size:12.4px;color:#1c1c1c;transform:scaleX(0.9305);">802.11 Captures (0)</span><div style="position:absolute;left:8px;top:512.3px;width:11px;height:1px;background:repeating-linear-gradient(90deg,#8a8a8a 0,#8a8a8a 1px,transparent 1px,transparent 2px)"></div><span class="t" style="left:40px;top:506.80px;font-size:12.4px;color:#1c1c1c;transform:scaleX(0.8993);">WPA-PSK Hashes (0)</span><div style="position:absolute;left:8px;top:530.3px;width:11px;height:1px;background:repeating-linear-gradient(90deg,#8a8a8a 0,#8a8a8a 1px,transparent 1px,transparent 2px)"></div><span class="t" style="left:40px;top:524.80px;font-size:12.4px;color:#1c1c1c;transform:scaleX(0.9289);">WPA-PSK Auth (0)</span><div style="position:absolute;left:8px;top:548.3px;width:11px;height:1px;background:repeating-linear-gradient(90deg,#8a8a8a 0,#8a8a8a 1px,transparent 1px,transparent 2px)"></div><span class="t" style="left:40px;top:542.80px;font-size:12.4px;color:#1c1c1c;transform:scaleX(0.8969);">CHAP Hashes (0)</span><svg style="position:absolute;left:0px;top:0.5px;" width="17" height="16" viewBox="0 0 16 16"><path d="M6.800 8.600L13.200 1l2 .3.300 1.700-1.300 1.500-1.300-.2-.2 1.400-1.300.2-.2 1.400-1.800 2.200z" fill="#f4e43c" stroke="#111" stroke-width="1.100"/><circle cx="4.800" cy="11.200" r="4" fill="#f4e43c" stroke="#111" stroke-width="1.200"/><circle cx="3.600" cy="12.400" r="1" fill="#111"/><path d="M5 9.500l1.500 1.500" stroke="#8a7e10" stroke-width=".8"/></svg><svg style="position:absolute;left:19px;top:20px;" width="16" height="14" viewBox="0 1 15 13"><path d="M5.500 1.800c2.200-1.300 4.300 1.200 7-.1l1.700 11c-2.700 1.300-4.800-1.200-7 .1z" fill="#0a0a0a"/><path d="M6.700 3.200c.9-.4 1.700 0 2.500.300l.4 2.800c-.8-.3-1.600-.7-2.500-.3z" fill="#d62222"/><path d="M10.300 3.800c.7.200 1.400.2 2.100 0l.4 2.800c-.7.200-1.400.2-2.100 0z" fill="#2aa02a"/><path d="M7.300 7.300c.9-.4 1.700 0 2.500.3l.4 2.800c-.8-.3-1.600-.7-2.500-.3z" fill="#2446d0"/><path d="M10.900 7.900c.7.200 1.400.2 2.100 0l.4 2.800c-.7.200-1.400.2-2.100 0z" fill="#e6d024"/><path d="M.8 3.200l4 .6M.8 5.200l4.300.6M1 7.200l4.400.6M1.400 9.200l4.300.6M1.800 11.200l4.200.6" stroke="#b01c1c" stroke-width="1.100"/><path d="M.8 4.200l4.200.6M.9 6.200l4.300.6M1.200 8.200l4.400.6M1.600 10.200l4.300.6" stroke="#1c2a9c" stroke-width=".9"/></svg><svg style="position:absolute;left:19px;top:38px;" width="16" height="14" viewBox="0 1 15 13"><path d="M5.500 1.800c2.200-1.300 4.300 1.200 7-.1l1.700 11c-2.700 1.300-4.800-1.200-7 .1z" fill="#0a0a0a"/><path d="M6.700 3.200c.9-.4 1.700 0 2.500.300l.4 2.800c-.8-.3-1.600-.7-2.500-.3z" fill="#d62222"/><path d="M10.300 3.800c.7.200 1.400.2 2.100 0l.4 2.800c-.7.200-1.400.2-2.100 0z" fill="#2aa02a"/><path d="M7.300 7.300c.9-.4 1.700 0 2.500.3l.4 2.800c-.8-.3-1.600-.7-2.500-.3z" fill="#2446d0"/><path d="M10.900 7.900c.7.200 1.400.2 2.100 0l.4 2.800c-.7.200-1.400.2-2.100 0z" fill="#e6d024"/><path d="M.8 3.200l4 .6M.8 5.200l4.300.6M1 7.200l4.400.6M1.400 9.200l4.300.6M1.800 11.200l4.200.6" stroke="#b01c1c" stroke-width="1.100"/><path d="M.8 4.200l4.200.6M.9 6.200l4.300.6M1.200 8.200l4.400.6M1.600 10.200l4.300.6" stroke="#1c2a9c" stroke-width=".9"/></svg><svg style="position:absolute;left:19px;top:56px;" width="16" height="14" viewBox="0 1 15 13"><path d="M5.500 1.800c2.200-1.300 4.300 1.200 7-.1l1.700 11c-2.700 1.300-4.800-1.200-7 .1z" fill="#0a0a0a"/><path d="M6.700 3.200c.9-.4 1.700 0 2.500.300l.4 2.800c-.8-.3-1.600-.7-2.500-.3z" fill="#d62222"/><path d="M10.300 3.800c.7.200 1.400.2 2.100 0l.4 2.800c-.7.200-1.400.2-2.100 0z" fill="#2aa02a"/><path d="M7.300 7.300c.9-.4 1.700 0 2.500.3l.4 2.800c-.8-.3-1.600-.7-2.500-.3z" fill="#2446d0"/><path d="M10.900 7.900c.7.200 1.400.2 2.100 0l.4 2.800c-.7.200-1.400.2-2.100 0z" fill="#e6d024"/><path d="M.8 3.200l4 .6M.8 5.200l4.300.6M1 7.200l4.400.6M1.400 9.200l4.300.6M1.800 11.200l4.200.6" stroke="#b01c1c" stroke-width="1.100"/><path d="M.8 4.200l4.200.6M.9 6.200l4.300.6M1.200 8.200l4.400.6M1.600 10.200l4.300.6" stroke="#1c2a9c" stroke-width=".9"/></svg><svg style="position:absolute;left:19px;top:73px;" width="16" height="16" viewBox="0 0 16 16"><path d="M4.500 5L9 .8l5 3.400-1.500 4.300-5 1z" fill="#f2f2f6" stroke="#111" stroke-width="1.200"/><path d="M7 4.800l2.500-2 2.500 1.700-1 2.300-2.800.5z" fill="#27349c"/><path d="M8 3.700l2.800 1.900" stroke="#cfd4ff" stroke-width=".7"/><circle cx="3.800" cy="12.300" r="3" fill="#f4e43c" stroke="#4a4208" stroke-width="1.200"/><path d="M6.200 10.800h8.800l.5 1.200-1.200 1.200-1-.7-1 1-1.200-1-1 .800H6.400z" fill="#f4e43c" stroke="#4a4208" stroke-width="1"/><circle cx="3" cy="12.300" r=".9" fill="#4a4208"/></svg><svg style="position:absolute;left:19px;top:94px;" width="16" height="11" viewBox="0 0 20 12"><rect x=".5" y=".5" width="19" height="11" fill="#1c8c1c" stroke="#0a330a" stroke-width="1"/><rect x="1.3" y="7.5" width="1.300" height="3.0" fill="#d2f79a"/><rect x="3.3" y="6" width="1.300" height="4.5" fill="#d2f79a"/><rect x="5.3" y="7.5" width="1.300" height="3.0" fill="#d2f79a"/><rect x="7.3" y="4.5" width="1.300" height="6.0" fill="#d2f79a"/><rect x="9.3" y="6.5" width="1.300" height="4.0" fill="#d2f79a"/><rect x="11.3" y="5.5" width="1.300" height="5.0" fill="#d2f79a"/><rect x="13.3" y="7.5" width="1.300" height="3.0" fill="#d2f79a"/><rect x="15.3" y="5" width="1.300" height="5.5" fill="#d2f79a"/><rect x="17.3" y="6.5" width="1.300" height="4.0" fill="#d2f79a"/><rect x="1" y="9.800" width="18" height="1.200" fill="#d2f79a"/><text x="10" y="6.500" font-family="Liberation Sans" font-size="6" font-weight="700" fill="#e8ffd0" text-anchor="middle">S</text></svg><svg style="position:absolute;left:19px;top:112px;" width="16" height="11" viewBox="0 0 20 12"><rect x=".5" y=".5" width="19" height="11" fill="#1c8c1c" stroke="#0a330a" stroke-width="1"/><rect x="1.3" y="7.5" width="1.300" height="3.0" fill="#d2f79a"/><rect x="3.3" y="6" width="1.300" height="4.5" fill="#d2f79a"/><rect x="5.3" y="7.5" width="1.300" height="3.0" fill="#d2f79a"/><rect x="7.3" y="4.5" width="1.300" height="6.0" fill="#d2f79a"/><rect x="9.3" y="6.5" width="1.300" height="4.0" fill="#d2f79a"/><rect x="11.3" y="5.5" width="1.300" height="5.0" fill="#d2f79a"/><rect x="13.3" y="7.5" width="1.300" height="3.0" fill="#d2f79a"/><rect x="15.3" y="5" width="1.300" height="5.5" fill="#d2f79a"/><rect x="17.3" y="6.5" width="1.300" height="4.0" fill="#d2f79a"/><rect x="1" y="9.800" width="18" height="1.200" fill="#d2f79a"/><text x="10" y="6.500" font-family="Liberation Sans" font-size="6" font-weight="700" fill="#e8ffd0" text-anchor="middle">P</text></svg><svg style="position:absolute;left:19px;top:127px;" width="16" height="16" viewBox="0 0 16 16"><path d="M2 2.500C3 .5 12 .5 13 3l1 4.500-2.500 1.500V5.500H5V9L2 7.500z" fill="#dcdcdc" stroke="#222" stroke-width="1"/><path d="M6.500 6h3.500v6.500h-3.500z" fill="#8a8a3a" stroke="#222" stroke-width=".9"/><path d="M5.500 12.500h5.500v2.500H5.500z" fill="#444"/><path d="M10 3v5" stroke="#fff" stroke-width="1.200"/></svg><svg style="position:absolute;left:19px;top:145px;" width="16" height="16" viewBox="0 0 16 16"><path d="M4 1.500h8l1 2H3z" fill="#e0e0e0" stroke="#222" stroke-width=".9"/><path d="M1 5.500h14l-1.500 4.500h-11z" fill="#cfcfcf" stroke="#222" stroke-width="1"/><path d="M2 7h12M2.500 8.500h11" stroke="#444" stroke-width=".8"/><path d="M5 10.500h6l-1.500 3h-3z" fill="#9a9a9a" stroke="#222" stroke-width=".9"/><path d="M8 13.500v2" stroke="#222" stroke-width="1.500"/></svg><svg style="position:absolute;left:20px;top:164px;" width="14" height="14" viewBox="0 0 16 16"><path d="M8 0l3 3.500H9.200v3.300h3.300V5l3.500 3-3.500 3V9.200H9.200v3.300H11L8 16l-3-3.500h1.800V9.200H3.500V11L0 8l3.500-3v1.800h3.300V3.500H5z" fill="#0a0a0a"/></svg><svg style="position:absolute;left:20px;top:182px;" width="14" height="14" viewBox="0 0 16 16"><path d="M8 0l3 3.500H9.200v3.300h3.300V5l3.500 3-3.500 3V9.200H9.200v3.300H11L8 16l-3-3.500h1.800V9.200H3.500V11L0 8l3.500-3v1.800h3.300V3.500H5z" fill="#0a0a0a"/></svg><svg style="position:absolute;left:20px;top:200px;" width="14" height="14" viewBox="0 0 16 16"><path d="M8 0l3 3.500H9.200v3.300h3.300V5l3.500 3-3.500 3V9.200H9.200v3.300H11L8 16l-3-3.500h1.800V9.200H3.500V11L0 8l3.500-3v1.800h3.300V3.500H5z" fill="#0a0a0a"/></svg><svg style="position:absolute;left:19px;top:217px;" width="16" height="16" viewBox="0 0 16 16"><rect x=".7" y=".7" width="14.600" height="14.600" fill="#fff" stroke="#000" stroke-width="1.400"/><path d="M2 3h3l1.500 6L8 3" fill="none" stroke="#c01010" stroke-width="1.800"/><path d="M2.500 3.500h2.500" stroke="#000" stroke-width="1.600"/><path d="M7.500 10V6.500h2.500V10" fill="none" stroke="#000" stroke-width="1.500"/><path d="M14 6.500h-2.800v3.800H14" fill="none" stroke="#000" stroke-width="1.500"/><path d="M6 9l1 5" stroke="#c01010" stroke-width="1.500"/><path d="M9 12.500h5" stroke="#c01010" stroke-width="1"/></svg><svg style="position:absolute;left:19px;top:235px;" width="16" height="16" viewBox="0 0 16 16"><text x="8" y="7" font-family="Liberation Sans" font-size="8.500" font-weight="700" fill="#111" text-anchor="middle" letter-spacing="-.3">md</text><text x="8" y="15" font-family="Liberation Sans" font-size="8.500" font-weight="700" fill="#c81a1a" text-anchor="middle">2</text></svg><svg style="position:absolute;left:19px;top:253px;" width="16" height="16" viewBox="0 0 16 16"><text x="8" y="7" font-family="Liberation Sans" font-size="8.500" font-weight="700" fill="#111" text-anchor="middle" letter-spacing="-.3">md</text><text x="8" y="15" font-family="Liberation Sans" font-size="8.500" font-weight="700" fill="#c81a1a" text-anchor="middle">4</text></svg><svg style="position:absolute;left:19px;top:271px;" width="16" height="16" viewBox="0 0 16 16"><text x="8" y="7" font-family="Liberation Sans" font-size="8.500" font-weight="700" fill="#111" text-anchor="middle" letter-spacing="-.3">md</text><text x="8" y="15" font-family="Liberation Sans" font-size="8.500" font-weight="700" fill="#c81a1a" text-anchor="middle">5</text></svg><svg style="position:absolute;left:19px;top:289px;" width="16" height="16" viewBox="0 0 16 16"><text x="8" y="7" font-family="Liberation Sans" font-size="7.500" font-weight="700" fill="#111" text-anchor="middle" letter-spacing="-.2">SHA</text><text x="8" y="15" font-family="Liberation Sans" font-size="8.500" font-weight="700" fill="#14148a" text-anchor="middle">1</text></svg><svg style="position:absolute;left:19px;top:307px;" width="16" height="16" viewBox="0 0 16 16"><text x="8" y="7" font-family="Liberation Sans" font-size="7.500" font-weight="700" fill="#111" text-anchor="middle" letter-spacing="-.2">SHA</text><text x="8" y="15" font-family="Liberation Sans" font-size="8.500" font-weight="700" fill="#14148a" text-anchor="middle">2</text></svg><svg style="position:absolute;left:19px;top:325px;" width="16" height="16" viewBox="0 0 16 16"><text x="8" y="7.500" font-family="Liberation Sans" font-size="9" font-weight="700" fill="#111" text-anchor="middle">R</text><text x="8" y="15.500" font-family="Liberation Sans" font-size="7.500" font-weight="400" fill="#1a7a2a" text-anchor="middle">160</text></svg><svg style="position:absolute;left:19px;top:343px;" width="16" height="16" viewBox="0 0 16 16"><circle cx="8" cy="9" r="6.300" fill="#fdfdfd" stroke="#111" stroke-width="1.300"/><path d="M8 9V4.800M8 9l3.200-2" stroke="#c81a1a" stroke-width="1" fill="none"/><path d="M2 3.500l2.500-2.500M14 3.500L11.500 1" stroke="#111" stroke-width="1.600"/><path d="M8 1v1.700" stroke="#111" stroke-width="1.200"/></svg><svg style="position:absolute;left:19px;top:361px;" width="16" height="16" viewBox="0 0 16 16"><path d="M2 1.500h9v7.500H2z" fill="#dfe4ef" stroke="#222" stroke-width="1"/><path d="M3.500 3h6v4.500h-6z" fill="#2a3fb0"/><path d="M1 10.500l2-1.500h9l2 1.500v2H1z" fill="#cfcfcf" stroke="#222" stroke-width=".9"/><circle cx="13" cy="11.500" r="2" fill="#f0dc3c" stroke="#5a4f10" stroke-width=".9"/><path d="M8 13.500h4v1.600H8z" fill="#f0dc3c" stroke="#5a4f10" stroke-width=".7"/></svg><svg style="position:absolute;left:19px;top:380px;" width="16" height="14" viewBox="0 1 16 14"><circle cx="4.200" cy="8" r="3" fill="none" stroke="#0a0a0a" stroke-width="1.800"/><circle cx="11.800" cy="9" r="3" fill="none" stroke="#0a0a0a" stroke-width="1.800"/><path d="M1.200 5.500C4 2.500 11 3 15.500 5" fill="none" stroke="#0a0a0a" stroke-width="1.800"/><path d="M.5 11.500c4 3 10 2.500 14.500 0" fill="none" stroke="#0a0a0a" stroke-width="1.500"/></svg><svg style="position:absolute;left:19px;top:397px;" width="16" height="16" viewBox="0 0 16 16"><path d="M1.500 1.500h8.500v12.500h-8.500z" fill="#d9d9d9" stroke="#3c3c3c" stroke-width="1"/><path d="M1.500 5.500h8.500M1.500 9.500h8.500" stroke="#3c3c3c" stroke-width="1"/><path d="M3 3.500h4M3 7.500h4M3 11.500h3" stroke="#f8f8f8" stroke-width="1.200"/><circle cx="11.300" cy="11" r="4.200" fill="#f8fff8" stroke="#141414" stroke-width="1.100"/><path d="M9.900 8.500l3.800 2.500-3.800 2.500z" fill="#149a24"/></svg><svg style="position:absolute;left:19px;top:415px;" width="16" height="16" viewBox="0 0 16 16"><path d="M1.500 1.500h8.500v12.500h-8.500z" fill="#d9d9d9" stroke="#3c3c3c" stroke-width="1"/><path d="M1.500 5.500h8.500M1.500 9.500h8.500" stroke="#3c3c3c" stroke-width="1"/><path d="M3 3.500h4M3 7.500h4M3 11.500h3" stroke="#f8f8f8" stroke-width="1.200"/><circle cx="11.300" cy="11" r="4.200" fill="#f8fff8" stroke="#141414" stroke-width="1.100"/><path d="M9.900 8.500l3.800 2.500-3.800 2.500z" fill="#149a24"/></svg><svg style="position:absolute;left:19px;top:433px;" width="16" height="16" viewBox="0 0 16 16"><path d="M1.500 1.500h8.500v12.500h-8.500z" fill="#d9d9d9" stroke="#3c3c3c" stroke-width="1"/><path d="M1.500 5.500h8.500M1.500 9.500h8.500" stroke="#3c3c3c" stroke-width="1"/><path d="M3 3.500h4M3 7.500h4M3 11.500h3" stroke="#f8f8f8" stroke-width="1.200"/><circle cx="11.300" cy="11" r="4.200" fill="#f8fff8" stroke="#141414" stroke-width="1.100"/><path d="M9.900 8.500l3.800 2.500-3.800 2.500z" fill="#149a24"/></svg><svg style="position:absolute;left:19px;top:451px;" width="16" height="16" viewBox="0 0 16 16"><path d="M1.500 1.500h8.500v12.500h-8.500z" fill="#d9d9d9" stroke="#3c3c3c" stroke-width="1"/><path d="M1.500 5.500h8.500M1.500 9.500h8.500" stroke="#3c3c3c" stroke-width="1"/><path d="M3 3.500h4M3 7.500h4M3 11.500h3" stroke="#f8f8f8" stroke-width="1.200"/><circle cx="11.300" cy="11" r="4.200" fill="#f8fff8" stroke="#141414" stroke-width="1.100"/><path d="M9.900 8.500l3.800 2.500-3.800 2.500z" fill="#149a24"/></svg><svg style="position:absolute;left:19px;top:469px;" width="16" height="16" viewBox="0 0 16 16"><path d="M1.500 10L8 2.500c1.500-1.800 4-1.500 5 .5l-2 1.500c-.5-.8-1.300-.8-2 0L4.500 10.500z" fill="#f0e23c" stroke="#4a4210" stroke-width="1"/><path d="M1 10h5v2.500H1z" fill="#f0e23c" stroke="#4a4210" stroke-width=".9"/><circle cx="11" cy="11" r="3.800" fill="#2a5fc8" stroke="#0f2660" stroke-width="1"/><path d="M9 9.500c1-1 2.500-.5 2.500.5s-1 1.500 0 2.500" fill="none" stroke="#5ac86a" stroke-width="1.300"/></svg><svg style="position:absolute;left:19px;top:487px;" width="16" height="16" viewBox="0 0 16 16"><path d="M4.800 15.200c0-2 1.200-3 1.700-5.500l.6-3.200c.3-1.300 1.500-1.300 1.800 0l.6 3.200c.5 2.500 1.700 3.500 1.700 5.500z" fill="#9c9c9c" stroke="#1f1f1f" stroke-width="1"/><path d="M6.800 14.500c0-2 .7-5 1.200-7" fill="none" stroke="#d8d8d8" stroke-width="1"/><path d="M4.800 2.300c-1.100 1.100-1.100 3.100 0 4.200M2.800 1c-1.900 1.900-1.900 5 0 6.900M11.200 2.300c1.100 1.100 1.100 3.100 0 4.200M13.200 1c1.900 1.900 1.900 5 0 6.900" fill="none" stroke="#c41c1c" stroke-width="1.100"/></svg><svg style="position:absolute;left:19px;top:505px;" width="16" height="16" viewBox="0 0 16 16"><path d="M4.800 15.200c0-2 1.200-3 1.700-5.500l.6-3.200c.3-1.300 1.500-1.300 1.800 0l.6 3.200c.5 2.500 1.700 3.500 1.700 5.500z" fill="#9c9c9c" stroke="#1f1f1f" stroke-width="1"/><path d="M6.800 14.500c0-2 .7-5 1.200-7" fill="none" stroke="#d8d8d8" stroke-width="1"/><path d="M4.800 2.300c-1.100 1.100-1.100 3.100 0 4.200M2.800 1c-1.900 1.900-1.900 5 0 6.900M11.200 2.300c1.100 1.100 1.100 3.100 0 4.200M13.200 1c1.900 1.900 1.900 5 0 6.900" fill="none" stroke="#c41c1c" stroke-width="1.100"/></svg><svg style="position:absolute;left:19px;top:523px;" width="16" height="16" viewBox="0 0 16 16"><path d="M4.800 15.200c0-2 1.200-3 1.700-5.500l.6-3.200c.3-1.300 1.500-1.300 1.800 0l.6 3.200c.5 2.500 1.700 3.500 1.700 5.500z" fill="#9c9c9c" stroke="#1f1f1f" stroke-width="1"/><path d="M6.800 14.500c0-2 .7-5 1.200-7" fill="none" stroke="#d8d8d8" stroke-width="1"/><path d="M4.800 2.300c-1.100 1.100-1.100 3.100 0 4.200M2.800 1c-1.900 1.900-1.900 5 0 6.900M11.200 2.300c1.100 1.100 1.100 3.100 0 4.200M13.200 1c1.900 1.900 1.900 5 0 6.900" fill="none" stroke="#c41c1c" stroke-width="1.100"/></svg><svg style="position:absolute;left:19px;top:542px;" width="16" height="14" viewBox="0 2 16 13"><path d="M4 12.500c-2.500 0-3.500-3 -1-4 0-2.500 3-3.500 4.500-1.800 1-2.200 5-1.700 5 1 2.500 0 3 3.500.5 4.300z" fill="#fafafa" stroke="#333" stroke-width="1"/><path d="M5 9.500c1-1.500 3-1.500 4 0M9.500 8c1-.8 2.300-.5 2.800.5" fill="none" stroke="#555" stroke-width=".8"/></svg><div style="position:absolute;left:0px;top:579px;width:150px;height:15px;background:#f0f1ef"></div><div style="position:absolute;left:17px;top:579px;width:88px;height:15px;background:#c6c9c5"></div><svg style="position:absolute;left:5px;top:582px;" width="8" height="10" viewBox="0 0 8 10"><path d="M6 1L2 5L6 9" fill="none" stroke="#4a4a4a" stroke-width="1.8"/></svg><svg style="position:absolute;left:138px;top:582px;" width="8" height="10" viewBox="0 0 8 10"><path d="M2 1L6 5L2 9" fill="none" stroke="#4a4a4a" stroke-width="1.8"/></svg></div>
<div style="position:absolute;left:161px;top:170px;width:2px;height:598px;background:#828282"></div><div style="position:absolute;left:161px;top:170px;width:865px;height:570px;background:#f7faf7;border-left:2px solid #828282;border-top:2px solid #828282"></div><div style="position:absolute;left:163px;top:193px;width:861px;height:526px;background:repeating-linear-gradient(transparent 0,transparent 16px,#ebeeea 16px,#ebeeea 17px)"></div><div style="position:absolute;left:163px;top:172px;width:150px;height:19px;background:#f0f0f0;border-left:1px solid #fff;border-top:1px solid #fff;border-right:2px solid #9a9a9a;border-bottom:2px solid #8a8a8a"></div><span class="t" style="left:169.3px;top:175.50px;font-size:12.4px;color:#1c1c1c;transform:scaleX(0.9209);">User Name</span><div style="position:absolute;left:313px;top:172px;width:110px;height:19px;background:#f0f0f0;border-left:1px solid #fff;border-top:1px solid #fff;border-right:2px solid #9a9a9a;border-bottom:2px solid #8a8a8a"></div><span class="t" style="left:319.3px;top:175.50px;font-size:12.4px;color:#1c1c1c;transform:scaleX(0.9259);">LM Password</span><div style="position:absolute;left:313px;top:191px;width:1px;height:528px;background:#ebeeea"></div><div style="position:absolute;left:423px;top:172px;width:30px;height:19px;background:#f0f0f0;border-left:1px solid #fff;border-top:1px solid #fff;border-right:2px solid #9a9a9a;border-bottom:2px solid #8a8a8a"></div><span class="t" style="left:429.7px;top:175.50px;font-size:12.4px;color:#1c1c1c;transform:scaleX(0.9273);">&lt; 8</span><div style="position:absolute;left:423px;top:191px;width:1px;height:528px;background:#ebeeea"></div><div style="position:absolute;left:453px;top:172px;width:110px;height:19px;background:#f0f0f0;border-left:1px solid #fff;border-top:1px solid #fff;border-right:2px solid #9a9a9a;border-bottom:2px solid #8a8a8a"></div><span class="t" style="left:459.5px;top:175.50px;font-size:12.4px;color:#1c1c1c;transform:scaleX(0.9104);">NT Password</span><div style="position:absolute;left:453px;top:191px;width:1px;height:528px;background:#ebeeea"></div><div style="position:absolute;left:563px;top:172px;width:100px;height:19px;background:#f0f0f0;border-left:1px solid #fff;border-top:1px solid #fff;border-right:2px solid #9a9a9a;border-bottom:2px solid #8a8a8a"></div><span class="t" style="left:569.4px;top:175.50px;font-size:12.4px;color:#1c1c1c;transform:scaleX(0.9316);">LM Hash</span><div style="position:absolute;left:563px;top:191px;width:1px;height:528px;background:#ebeeea"></div><div style="position:absolute;left:663px;top:172px;width:100px;height:19px;background:#f0f0f0;border-left:1px solid #fff;border-top:1px solid #fff;border-right:2px solid #9a9a9a;border-bottom:2px solid #8a8a8a"></div><span class="t" style="left:669px;top:175.50px;font-size:12.4px;color:#1c1c1c;transform:scaleX(0.9369);">NT Hash</span><div style="position:absolute;left:663px;top:191px;width:1px;height:528px;background:#ebeeea"></div><div style="position:absolute;left:763px;top:172px;width:100px;height:19px;background:#f0f0f0;border-left:1px solid #fff;border-top:1px solid #fff;border-right:2px solid #9a9a9a;border-bottom:2px solid #8a8a8a"></div><span class="t" style="left:769.7px;top:175.50px;font-size:12.4px;color:#1c1c1c;transform:scaleX(0.9479);">challenge</span><div style="position:absolute;left:763px;top:191px;width:1px;height:528px;background:#ebeeea"></div><div style="position:absolute;left:863px;top:172px;width:100px;height:19px;background:#f0f0f0;border-left:1px solid #fff;border-top:1px solid #fff;border-right:2px solid #9a9a9a;border-bottom:2px solid #8a8a8a"></div><span class="t" style="left:869.7px;top:175.50px;font-size:12.4px;color:#1c1c1c;transform:scaleX(0.9563);">Type</span><div style="position:absolute;left:863px;top:191px;width:1px;height:528px;background:#ebeeea"></div><div style="position:absolute;left:963px;top:172px;width:61px;height:19px;background:#f0f0f0;border-left:1px solid #fff;border-top:1px solid #fff;border-right:0;border-bottom:2px solid #8a8a8a"></div><span class="t" style="left:969.4px;top:175.50px;font-size:12.4px;color:#1c1c1c;transform:scaleX(0.9928);">Note</span><div style="position:absolute;left:963px;top:191px;width:1px;height:528px;background:#ebeeea"></div><span class="t" style="left:183.4px;top:195.60px;font-size:12.4px;color:#1c1c1c;">Admin</span><span class="t" style="left:869.7px;top:195.60px;font-size:12.4px;color:#1c1c1c;transform:scaleX(0.9865);">LM &amp; NTLM</span><span class="t" style="left:183.4px;top:212.60px;font-size:12.4px;color:#1c1c1c;transform:scaleX(0.9915);">Administrator</span><span class="t" style="left:869.7px;top:212.60px;font-size:12.4px;color:#1c1c1c;transform:scaleX(0.9865);">LM &amp; NTLM</span><span class="t" style="left:183.4px;top:229.60px;font-size:12.4px;color:#1c1c1c;transform:scaleX(0.9709);">DefaultAccount</span><span class="t" style="left:869.7px;top:229.60px;font-size:12.4px;color:#1c1c1c;transform:scaleX(0.9865);">LM &amp; NTLM</span><span class="t" style="left:183.4px;top:246.60px;font-size:12.4px;color:#1c1c1c;transform:scaleX(0.9104);">Guest</span><span class="t" style="left:869.7px;top:246.60px;font-size:12.4px;color:#1c1c1c;transform:scaleX(0.9865);">LM &amp; NTLM</span><span class="t" style="left:183.4px;top:263.60px;font-size:12.4px;color:#1c1c1c;transform:scaleX(0.9196);">WDAGUtilityAccount</span><span class="t" style="left:869.7px;top:263.60px;font-size:12.4px;color:#1c1c1c;transform:scaleX(0.9865);">LM &amp; NTLM</span><span class="t" style="left:319.3px;top:195.60px;font-size:12.4px;color:#1c1c1c;transform:scaleX(0.9884);">* empty *</span><span class="t" style="left:429.7px;top:195.60px;font-size:12.4px;color:#1c1c1c;transform:scaleX(0.8906);">*</span><span class="t" style="left:569.4px;top:195.60px;font-size:12.4px;color:#1c1c1c;transform:scaleX(0.8817);">AAD3B435B51...</span><span class="t" style="left:669px;top:195.60px;font-size:12.4px;color:#1c1c1c;transform:scaleX(0.8780);">A87F3A337D73...</span><div style="position:absolute;left:1024px;top:172px;width:2px;height:568px;background:#fbfcfb"></div><div style="position:absolute;left:163px;top:720px;width:861px;height:17px;background:#f0f1ef"></div><div style="position:absolute;left:180px;top:720px;width:712px;height:17px;background:#c6c9c5"></div><svg style="position:absolute;left:167px;top:724px;" width="8" height="10" viewBox="0 0 8 10"><path d="M6 1L2 5L6 9" fill="none" stroke="#4a4a4a" stroke-width="1.8"/></svg><svg style="position:absolute;left:1011px;top:724px;" width="8" height="10" viewBox="0 0 8 10"><path d="M2 1L6 5L2 9" fill="none" stroke="#4a4a4a" stroke-width="1.8"/></svg><div style="position:absolute;left:163px;top:741px;width:861px;height:1px;background:#000"></div><div style="position:absolute;left:163px;top:739px;width:165px;height:23px;background:#f0f0f0;border:1px solid #000;border-top:0;border-right-width:2px;border-bottom-width:2px"></div><span class="t" style="left:200px;top:745.50px;font-size:12.4px;color:#1c1c1c;transform:scaleX(0.9548);">LM &amp; NTLM Hashes</span><svg style="position:absolute;left:165.5px;top:193.2px;" width="14.5" height="15.5" viewBox="0 0 16 16"><path d="M1.200 2.500L4 .3 8 5.300 12 .3l2.800 2.200L10.400 8l4.400 5.500-2.800 2.200L8 10.700 4 15.700 1.200 13.500 5.600 8z" fill="#8e1212" stroke="#5c0808" stroke-width=".6"/></svg><svg style="position:absolute;left:165.5px;top:210.2px;" width="14.5" height="15.5" viewBox="0 0 16 16"><path d="M1.200 2.500L4 .3 8 5.300 12 .3l2.800 2.200L10.400 8l4.400 5.500-2.800 2.200L8 10.700 4 15.700 1.200 13.500 5.600 8z" fill="#8e1212" stroke="#5c0808" stroke-width=".6"/></svg><svg style="position:absolute;left:164.5px;top:226.5px;" width="16.5" height="17" viewBox="0 0 16 16"><path d="M4.600 6.500L1.800 9l1.200.8-1.400 1.200 1.300.8-1.300 1.200 1.400.8-.6 1.700 2.200-.5L6.800 7.500z" fill="#ececec" stroke="#2a2a2a" stroke-width=".9"/><path d="M7.500 6l6.500 6.500-.3 2-2.200.3L5.800 8z" fill="#e8dc4c" stroke="#2a2a1a" stroke-width="1"/><path d="M8 8l4.500 5" stroke="#fff9b0" stroke-width=".8"/><circle cx="6.200" cy="4.200" r="3.300" fill="#f0eca0" stroke="#2a2a2a" stroke-width="1.200"/><circle cx="6.200" cy="3.600" r="1.100" fill="#f7faf7" stroke="#2a2a2a" stroke-width=".7"/></svg><svg style="position:absolute;left:164.5px;top:243.5px;" width="16.5" height="17" viewBox="0 0 16 16"><path d="M4.600 6.500L1.800 9l1.200.8-1.400 1.200 1.300.8-1.300 1.200 1.400.8-.6 1.700 2.200-.5L6.800 7.500z" fill="#ececec" stroke="#2a2a2a" stroke-width=".9"/><path d="M7.500 6l6.500 6.500-.3 2-2.200.3L5.800 8z" fill="#e8dc4c" stroke="#2a2a1a" stroke-width="1"/><path d="M8 8l4.500 5" stroke="#fff9b0" stroke-width=".8"/><circle cx="6.200" cy="4.200" r="3.300" fill="#f0eca0" stroke="#2a2a2a" stroke-width="1.200"/><circle cx="6.200" cy="3.600" r="1.100" fill="#f7faf7" stroke="#2a2a2a" stroke-width=".7"/></svg><svg style="position:absolute;left:165.5px;top:261.2px;" width="14.5" height="15.5" viewBox="0 0 16 16"><path d="M1.200 2.500L4 .3 8 5.300 12 .3l2.800 2.200L10.400 8l4.400 5.500-2.800 2.200L8 10.700 4 15.700 1.200 13.500 5.600 8z" fill="#8e1212" stroke="#5c0808" stroke-width=".6"/></svg><svg style="position:absolute;left:166px;top:744px;" width="16" height="14" viewBox="0 1 15 13"><path d="M5.500 1.800c2.200-1.300 4.300 1.200 7-.1l1.700 11c-2.700 1.300-4.800-1.200-7 .1z" fill="#0a0a0a"/><path d="M6.700 3.200c.9-.4 1.700 0 2.500.300l.4 2.800c-.8-.3-1.600-.7-2.500-.3z" fill="#d62222"/><path d="M10.300 3.800c.7.200 1.400.2 2.100 0l.4 2.800c-.7.200-1.400.2-2.100 0z" fill="#2aa02a"/><path d="M7.300 7.300c.9-.4 1.700 0 2.500.3l.4 2.800c-.8-.3-1.600-.7-2.500-.3z" fill="#2446d0"/><path d="M10.900 7.900c.7.200 1.400.2 2.100 0l.4 2.800c-.7.200-1.400.2-2.100 0z" fill="#e6d024"/><path d="M.8 3.200l4 .6M.8 5.200l4.300.6M1 7.200l4.400.6M1.400 9.200l4.300.6M1.800 11.200l4.200.6" stroke="#b01c1c" stroke-width="1.100"/><path d="M.8 4.200l4.200.6M.9 6.200l4.300.6M1.200 8.200l4.400.6M1.600 10.200l4.300.6" stroke="#1c2a9c" stroke-width=".9"/></svg>
<div style="position:absolute;left:2px;top:768px;width:1024px;height:2px;background:#fff"></div><span class="t" style="left:4.3px;top:774.13px;font-size:12.6px;color:#1c1c1c;transform:scaleX(1.0233);">http://www.oxid.it</span><div style="position:absolute;left:2px;top:789px;width:1024px;height:40px;background:#0a131b"></div><div style="position:absolute;left:50px;top:789px;width:320px;height:40px;background:#f2f2f2"></div><svg style="position:absolute;left:18px;top:802px;" width="17" height="17" viewBox="0 0 17 17"><path d="M0 2.4L6.9 1.4V8H0zM7.8 1.3L17 0V8H7.8zM0 8.9H6.9V15.5L0 14.5zM7.8 8.9H17V17L7.8 15.7z" fill="#fff"/></svg><svg style="position:absolute;left:59px;top:798px;" width="22" height="22" viewBox="0 0 22 22"><circle cx="11" cy="11" r="8.4" fill="none" stroke="#141414" stroke-width="3"/></svg><span class="t" style="left:90.5px;top:802.13px;font-size:15.2px;color:#3b3b3b;transform:scaleX(0.9498);">Type here to search</span><svg style="position:absolute;left:344px;top:801px;" width="11" height="17" viewBox="0 0 11 17"><rect x="3.2" y="0.6" width="4.6" height="9.5" rx="2.3" fill="none" stroke="#3a3a3a" stroke-width="1.2"/><path d="M1 7.5a4.5 4.5 0 0 0 9 0M5.5 12v3.5" fill="none" stroke="#3a3a3a" stroke-width="1.2"/></svg><svg style="position:absolute;left:384px;top:802px;" width="20" height="15" viewBox="0 0 20 15"><rect x="3.5" y="1.5" width="13" height="12" fill="none" stroke="#fff" stroke-width="1.3"/><path d="M.6 3.5v8M19.4 3.5v8" stroke="#fff" stroke-width="1.3"/></svg><div style="position:absolute;left:568px;top:789px;width:48px;height:40px;background:#3a4046"></div><div style="position:absolute;left:522px;top:827px;width:42px;height:2px;background:#84bfe8"></div><div style="position:absolute;left:568px;top:827px;width:48px;height:2px;background:#84bfe8"></div><svg style="position:absolute;left:435px;top:798px;" width="22" height="22" viewBox="0 0 22 22"><path d="M1 12.500C1 5.500 6 1 11.500 1c6 0 9.500 4.500 9.500 10v2.500H8c.3 3 2.800 4.300 5.800 4.300 2.500 0 4.500-.8 6-1.700v4.500c-2 1-4.500 1.500-7 1.500C6.500 22 2.700 18 2.700 12.500 2.700 9 4.800 6.300 7.500 5 4 6 1.600 9 1 12.500zM8 9.500h7.500c0-2.300-1.300-4-3.800-4S8.200 7.500 8 9.500z" fill="#2a8de0"/></svg><svg style="position:absolute;left:482.5px;top:800px;" width="23" height="19" viewBox="0 0 23 19"><path d="M1 2.500h7l2 2H22V17H1z" fill="#e8b63a"/><path d="M1 6h21v11.500H1z" fill="#fbd66a"/><path d="M6 11h11v6.500H6z" fill="#4aa0e0"/><path d="M8 13h7v4.500H8z" fill="#fbd66a"/><path d="M1 17h21v1.500H1z" fill="#d59a20"/></svg><svg style="position:absolute;left:530.5px;top:795.5px;" width="26" height="26" viewBox="0 0 26 26"><path d="M13 4.5a8.6 8.6 0 1 0 8.1 11.5h-4.700a4.2 4.2 0 0 1-7.6-1.700h12.6A8.6 8.6 0 0 0 13 4.5zM8.900 11.300a4.2 4.2 0 0 1 8.2 0z" fill="#5abcf4"/><path d="M3.5 17.5C.5 22 1.500 24.5 6 23c3-1 6.5-3.500 10-7" fill="none" stroke="#f0c43a" stroke-width="1.800"/><path d="M15 6c4-3.5 8.5-5 9.500-3s-.5 4.5-2.500 7" fill="none" stroke="#f0c43a" stroke-width="1.800"/></svg><svg style="position:absolute;left:580px;top:797.5px;" width="24" height="22.5" viewBox="0 0 24 22.5"><rect x=".5" y=".5" width="23" height="21.500" rx="1.500" fill="#000" stroke="#9a9a9a" stroke-width="1"/><path d="M19 4.200H4.500V18H20.500" fill="none" stroke="#d81e1e" stroke-width="2.400"/><text x="7.500" y="15" font-family="Liberation Sans" font-size="8.500" font-weight="700" fill="#3ee03e">ain</text></svg><svg style="position:absolute;left:943px;top:805px;" width="13" height="8" viewBox="0 0 13 8"><path d="M1 7L6.5 1.5L12 7" fill="none" stroke="#fff" stroke-width="1.3"/></svg><svg style="position:absolute;left:964px;top:802px;" width="18" height="16" viewBox="0 0 18 16"><rect x="4.5" y="1.5" width="12" height="9" fill="none" stroke="#fff" stroke-width="1.2"/><path d="M7 14.5h7M10.5 11v3.5M2.5 3v12" stroke="#fff" stroke-width="1.2"/><rect x="0.6" y="1.6" width="4" height="4" fill="#0a131b" stroke="#fff" stroke-width="1"/></svg><span class="t" style="left:991px;top:803.50px;font-size:12.4px;color:#fff;transform:scaleX(0.8563);">ENG</span><div style="position:absolute;left:1021px;top:789px;width:1px;height:40px;background:#6b737a"></div>
<div style="position:absolute;left:221px;top:208px;width:587px;height:433px;background:#f0f0f0;border:1px solid #5aa0c4;box-shadow:0 2px 12px 1px rgba(0,0,0,.22)"></div><div style="position:absolute;left:222px;top:209px;width:585px;height:25px;background:#fbfdfa"></div><span class="t" style="left:225.6px;top:215.17px;font-size:12.2px;transform:scaleX(0.9720);">Brute-Force Attack</span><svg style="position:absolute;left:786px;top:215px;" width="12" height="12" viewBox="0 0 12 12"><path d="M.8 .8L11.2 11.2M11.2 .8L.8 11.2" stroke="#111" stroke-width="1.2"/></svg><div style="position:absolute;left:233px;top:251px;width:436px;height:117px;border:1px solid #a3a3a3;box-shadow:1px 1px 0 #fff,inset 1px 1px 0 #fff"></div><div style="position:absolute;left:241px;top:249px;width:39px;height:5px;background:#f0f0f0"></div><span class="t" style="left:243px;top:246.89px;font-size:11px;transform:scaleX(0.9084);">Charset</span><svg style="position:absolute;left:243px;top:276px;" width="12" height="12" viewBox="0 0 12 12"><circle cx="6" cy="6" r="5.3" fill="#fff" stroke="#fdfdfd" stroke-width="1.2"/><path d="M2.3 9.7A5.3 5.3 0 0 1 9.7 2.3" fill="none" stroke="#9a9a9a" stroke-width="1.2"/><path d="M3.1 8.9A4.1 4.1 0 0 1 8.9 3.1" fill="none" stroke="#5a5a5a" stroke-width="1"/><path d="M3.1 8.9A4.1 4.1 0 0 0 8.9 3.1" fill="none" stroke="#dcdcdc" stroke-width="1"/><circle cx="6" cy="6" r="1.9" fill="#000"/></svg><span class="t" style="left:261.6px;top:277.69px;font-size:11px;transform:scaleX(0.9508);">Predefined</span><div style="position:absolute;left:243px;top:294.5px;width:414px;height:19.80000000000001px;background:#f7faf7;border:1px solid;border-color:#828282 #fff #fff #828282;box-shadow:inset 1px 1px 0 #5a5a5a,inset -1px -1px 0 #e3e3e3"></div><span class="t" style="left:247px;top:299.69px;font-size:11px;transform:scaleX(0.9643);">abcdefghijklmnopqrstuvwxyz0123456789</span><div style="position:absolute;left:640px;top:296.3px;width:16px;height:16.5px;background:#f0f0f0;border:1px solid;border-color:#fff #6a6a6a #6a6a6a #fff;box-shadow:inset -1px -1px 0 #a0a0a0"></div><svg style="position:absolute;left:644.3px;top:302.5px;" width="7.4" height="4.2" viewBox="0 0 7.4 4.2"><path d="M0 0H7.4L3.7 4.2z" fill="#000"/></svg><div style="position:absolute;left:677px;top:251px;width:119px;height:68px;border:1px solid #a3a3a3;box-shadow:1px 1px 0 #fff,inset 1px 1px 0 #fff"></div><div style="position:absolute;left:684.3px;top:249px;width:81.70000000000005px;height:5px;background:#f0f0f0"></div><span class="t" style="left:686.3px;top:246.89px;font-size:11px;transform:scaleX(0.9554);">Password length</span><span class="t" style="left:692.5px;top:269.59px;font-size:11px;transform:scaleX(0.9304);">Min</span><span class="t" style="left:692.5px;top:294.49px;font-size:11px;transform:scaleX(0.9383);">Max</span><div style="position:absolute;left:728.2px;top:263.4px;width:40.09999999999991px;height:21.600000000000023px;background:#f7faf7;border:1px solid;border-color:#828282 #fff #fff #828282;box-shadow:inset 1px 1px 0 #5a5a5a,inset -1px -1px 0 #e3e3e3"></div><span class="t" style="left:731.6px;top:267.49px;font-size:11px;">1</span><div style="position:absolute;left:751.8px;top:265.4px;width:14.7px;height:9px;background:#f0f0f0;border:1px solid;border-color:#fff #7a7a7a #7a7a7a #fff;box-shadow:inset -1px -1px 0 #b4b4b4"></div><svg style="position:absolute;left:757px;top:268.9px;" width="4" height="2" viewBox="0 0 4 2"><path d="M0 2L2 0L4 2z" fill="#000"/></svg><div style="position:absolute;left:751.8px;top:274.4px;width:14.7px;height:9px;background:#f0f0f0;border:1px solid;border-color:#fff #7a7a7a #7a7a7a #fff;box-shadow:inset -1px -1px 0 #b4b4b4"></div><svg style="position:absolute;left:757px;top:277.9px;" width="4" height="2" viewBox="0 0 4 2"><path d="M0 0L2 2L4 0z" fill="#000"/></svg><div style="position:absolute;left:728.2px;top:289.2px;width:40.09999999999991px;height:21.600000000000023px;background:#f7faf7;border:1px solid;border-color:#828282 #fff #fff #828282;box-shadow:inset 1px 1px 0 #5a5a5a,inset -1px -1px 0 #e3e3e3"></div><span class="t" style="left:731.6px;top:293.29px;font-size:11px;transform:scaleX(0.9306);">16</span><div style="position:absolute;left:751.8px;top:291.2px;width:14.7px;height:9px;background:#f0f0f0;border:1px solid;border-color:#fff #7a7a7a #7a7a7a #fff;box-shadow:inset -1px -1px 0 #b4b4b4"></div><svg style="position:absolute;left:757px;top:294.7px;" width="4" height="2" viewBox="0 0 4 2"><path d="M0 2L2 0L4 2z" fill="#000"/></svg><div style="position:absolute;left:751.8px;top:300.2px;width:14.7px;height:9px;background:#f0f0f0;border:1px solid;border-color:#fff #7a7a7a #7a7a7a #fff;box-shadow:inset -1px -1px 0 #b4b4b4"></div><svg style="position:absolute;left:757px;top:303.7px;" width="4" height="2" viewBox="0 0 4 2"><path d="M0 0L2 2L4 0z" fill="#000"/></svg><div style="position:absolute;left:677px;top:329px;width:119px;height:40px;border:1px solid #a3a3a3;box-shadow:1px 1px 0 #fff,inset 1px 1px 0 #fff"></div><div style="position:absolute;left:684.3px;top:327px;width:49.10000000000002px;height:5px;background:#f0f0f0"></div><span class="t" style="left:686.3px;top:324.89px;font-size:11px;transform:scaleX(0.9338);">Start from</span><div style="position:absolute;left:687px;top:342px;width:97.5px;height:20.5px;background:#f7faf7;border:1px solid;border-color:#828282 #fff #fff #828282;box-shadow:inset 1px 1px 0 #5a5a5a,inset -1px -1px 0 #e3e3e3"></div><div style="position:absolute;left:233px;top:383px;width:278px;height:37px;border:1px solid #a3a3a3;box-shadow:1px 1px 0 #fff,inset 1px 1px 0 #fff"></div><div style="position:absolute;left:242px;top:395px;width:261px;height:19px;background:#f0f0f0;border:1px solid;border-color:#a3a3a3 #fff #fff #a3a3a3"></div><div style="position:absolute;left:518px;top:383px;width:278px;height:37px;border:1px solid #a3a3a3;box-shadow:1px 1px 0 #fff,inset 1px 1px 0 #fff"></div><div style="position:absolute;left:527px;top:395px;width:261px;height:19px;background:#f0f0f0;border:1px solid;border-color:#a3a3a3 #fff #fff #a3a3a3"></div><div class="clip" style="left:300px;top:407.5px;width:150px;height:2px"><span class="t" style="left:5.5px;top:-8.6px;font-size:11px;transform:scaleX(.965)">abcdefghijklmnopqrstuvwxyz0123456789</span></div><div style="position:absolute;left:233px;top:430px;width:278px;height:37px;border:1px solid #a3a3a3;box-shadow:1px 1px 0 #fff,inset 1px 1px 0 #fff"></div><div style="position:absolute;left:240.6px;top:428px;width:47.70000000000002px;height:5px;background:#f0f0f0"></div><span class="t" style="left:242.6px;top:425.89px;font-size:11px;transform:scaleX(0.9657);">Key Rate</span><div style="position:absolute;left:242px;top:442px;width:261px;height:19px;background:#f0f0f0;border:1px solid;border-color:#a3a3a3 #fff #fff #a3a3a3"></div><div style="position:absolute;left:518px;top:430px;width:278px;height:37px;border:1px solid #a3a3a3;box-shadow:1px 1px 0 #fff,inset 1px 1px 0 #fff"></div><div style="position:absolute;left:526.6px;top:428px;width:46.69999999999993px;height:5px;background:#f0f0f0"></div><span class="t" style="left:528.6px;top:425.89px;font-size:11px;transform:scaleX(0.9394);">Time Left</span><div style="position:absolute;left:527px;top:442px;width:261px;height:19px;background:#f0f0f0;border:1px solid;border-color:#a3a3a3 #fff #fff #a3a3a3"></div><div style="position:absolute;left:233px;top:476px;width:563px;height:125px;border:1px solid #a3a3a3;box-shadow:1px 1px 0 #fff,inset 1px 1px 0 #fff"></div><div style="position:absolute;left:242px;top:485px;width:545px;height:107px;background:#f7faf7;border:1px solid;border-color:#828282 #fff #fff #828282;box-shadow:inset 1px 1px 0 #5a5a5a,inset -1px -1px 0 #e3e3e3"></div><span class="t" style="left:245.6px;top:489.10px;font-size:12.4px;font-family:'Liberation Mono',monospace;letter-spacing:0.6px;">1 hashes of type NTLM loaded...</span><span class="t" style="left:245.6px;top:501.90px;font-size:12.4px;font-family:'Liberation Mono',monospace;letter-spacing:0.6px;">Press the Start button to begin brute-force attack</span><div style="position:absolute;left:648px;top:606px;width:75px;height:22.5px;background:#f0f0f0;border:1px solid #1a1a1a;box-shadow:inset 1px 1px 0 #fff,inset -1px -1px 0 #6a6a6a,inset -2px -2px 0 #a0a0a0"></div><div style="position:absolute;left:723px;top:606px;width:74px;height:22.5px;background:#f0f0f0;border:1px solid;border-color:#fff #6a6a6a #6a6a6a #fff;box-shadow:inset -1px -1px 0 #a0a0a0"></div><span class="t" style="left:674px;top:611.69px;font-size:11px;transform:scaleX(0.9727);">Start</span><span class="t" style="left:751.4px;top:611.69px;font-size:11px;transform:scaleX(0.9158);">Exit</span><div style="position:absolute;left:242px;top:315px;width:417px;height:93px;background:#f7faf7;border:1px solid #3a3a3a"></div><div class="clip" style="left:243px;top:316px;width:397.6px;height:91px"><span class="t" style="left:3px;top:2.29px;font-size:11px;transform:scaleX(0.9606);">abcdefghijklmnopqrstuvwxyz</span><span class="t" style="left:137.8px;top:2.29px;font-size:11px;transform:scaleX(0.9675);">0123456789</span><span class="t" style="left:3px;top:15.24px;font-size:11px;transform:scaleX(0.9606);">abcdefghijklmnopqrstuvwxyz</span><span class="t" style="left:137.8px;top:15.24px;font-size:11px;transform:scaleX(0.9675);">0123456789</span><span class="t" style="left:197.3px;top:15.24px;font-size:11px;transform:scaleX(0.9339);">!@#$%^&amp;*()-_+=</span><span class="t" style="left:3px;top:28.19px;font-size:11px;transform:scaleX(0.9606);">abcdefghijklmnopqrstuvwxyz</span><span class="t" style="left:137.8px;top:28.19px;font-size:11px;transform:scaleX(0.9675);">0123456789</span><span class="t" style="left:197.3px;top:28.19px;font-size:11px;transform:scaleX(0.9339);">!@#$%^&amp;*()-_+=</span><span class="t" style="left:275.5px;top:28.19px;font-size:11px;transform:scaleX(1.0485);">~`[]{}|\:;&quot;&#x27;&lt;&gt;,.?/</span><span class="t" style="left:3px;top:41.14px;font-size:11px;transform:scaleX(0.9606);">abcdefghijklmnopqrstuvwxyz</span><span class="t" style="left:138px;top:41.14px;font-size:11px;transform:scaleX(0.9636);">ABCDEFGHIJKLMNOPQRSTUVWXYZ</span><span class="t" style="left:3px;top:54.09px;font-size:11px;transform:scaleX(0.9606);">abcdefghijklmnopqrstuvwxyz</span><span class="t" style="left:138px;top:54.09px;font-size:11px;transform:scaleX(0.9636);">ABCDEFGHIJKLMNOPQRSTUVWXYZ</span><span class="t" style="left:325.2px;top:54.09px;font-size:11px;transform:scaleX(0.9773);">0123456789</span><div style="position:absolute;left:0px;top:65.4px;width:398px;height:12.8px;background:#0a6fc4"></div><span class="t" style="left:3px;top:67.04px;font-size:11px;color:#fff;transform:scaleX(0.9606);">abcdefghijklmnopqrstuvwxyz</span><span class="t" style="left:138px;top:67.04px;font-size:11px;color:#fff;transform:scaleX(0.9636);">ABCDEFGHIJKLMNOPQRSTUVWXYZ</span><span class="t" style="left:325.2px;top:67.04px;font-size:11px;color:#fff;transform:scaleX(0.9773);">0123456789</span><span class="t" style="left:385.6px;top:67.04px;font-size:11px;color:#fff;transform:scaleX(0.9765);">!@</span><span class="t" style="left:3px;top:79.99px;font-size:11px;transform:scaleX(0.9606);">abcdefghijklmnopqrstuvwxyz</span><span class="t" style="left:138px;top:79.99px;font-size:11px;transform:scaleX(0.9636);">ABCDEFGHIJKLMNOPQRSTUVWXYZ</span><span class="t" style="left:325.2px;top:79.99px;font-size:11px;transform:scaleX(0.9773);">0123456789</span><span class="t" style="left:385.6px;top:79.99px;font-size:11px;transform:scaleX(0.9765);">!@</span></div><div style="position:absolute;left:640.6px;top:316px;width:17.4px;height:91px;background:#f0f1ef"></div><div style="position:absolute;left:640.6px;top:359.5px;width:17.4px;height:30px;background:#c6c9c5"></div><svg style="position:absolute;left:644.5px;top:321px;" width="9" height="6" viewBox="0 0 9 6"><path d="M1 5L4.5 1.5L8 5" fill="none" stroke="#4a4a4a" stroke-width="1.6"/></svg><svg style="position:absolute;left:644.5px;top:397.5px;" width="9" height="6" viewBox="0 0 9 6"><path d="M1 1L4.5 4.5L8 1" fill="none" stroke="#4a4a4a" stroke-width="1.6"/></svg>
<div style="position:absolute;left:0px;top:0px;width:1030px;height:833px;border:1px solid #2a76a3;pointer-events:none"></div>
</body></html>
